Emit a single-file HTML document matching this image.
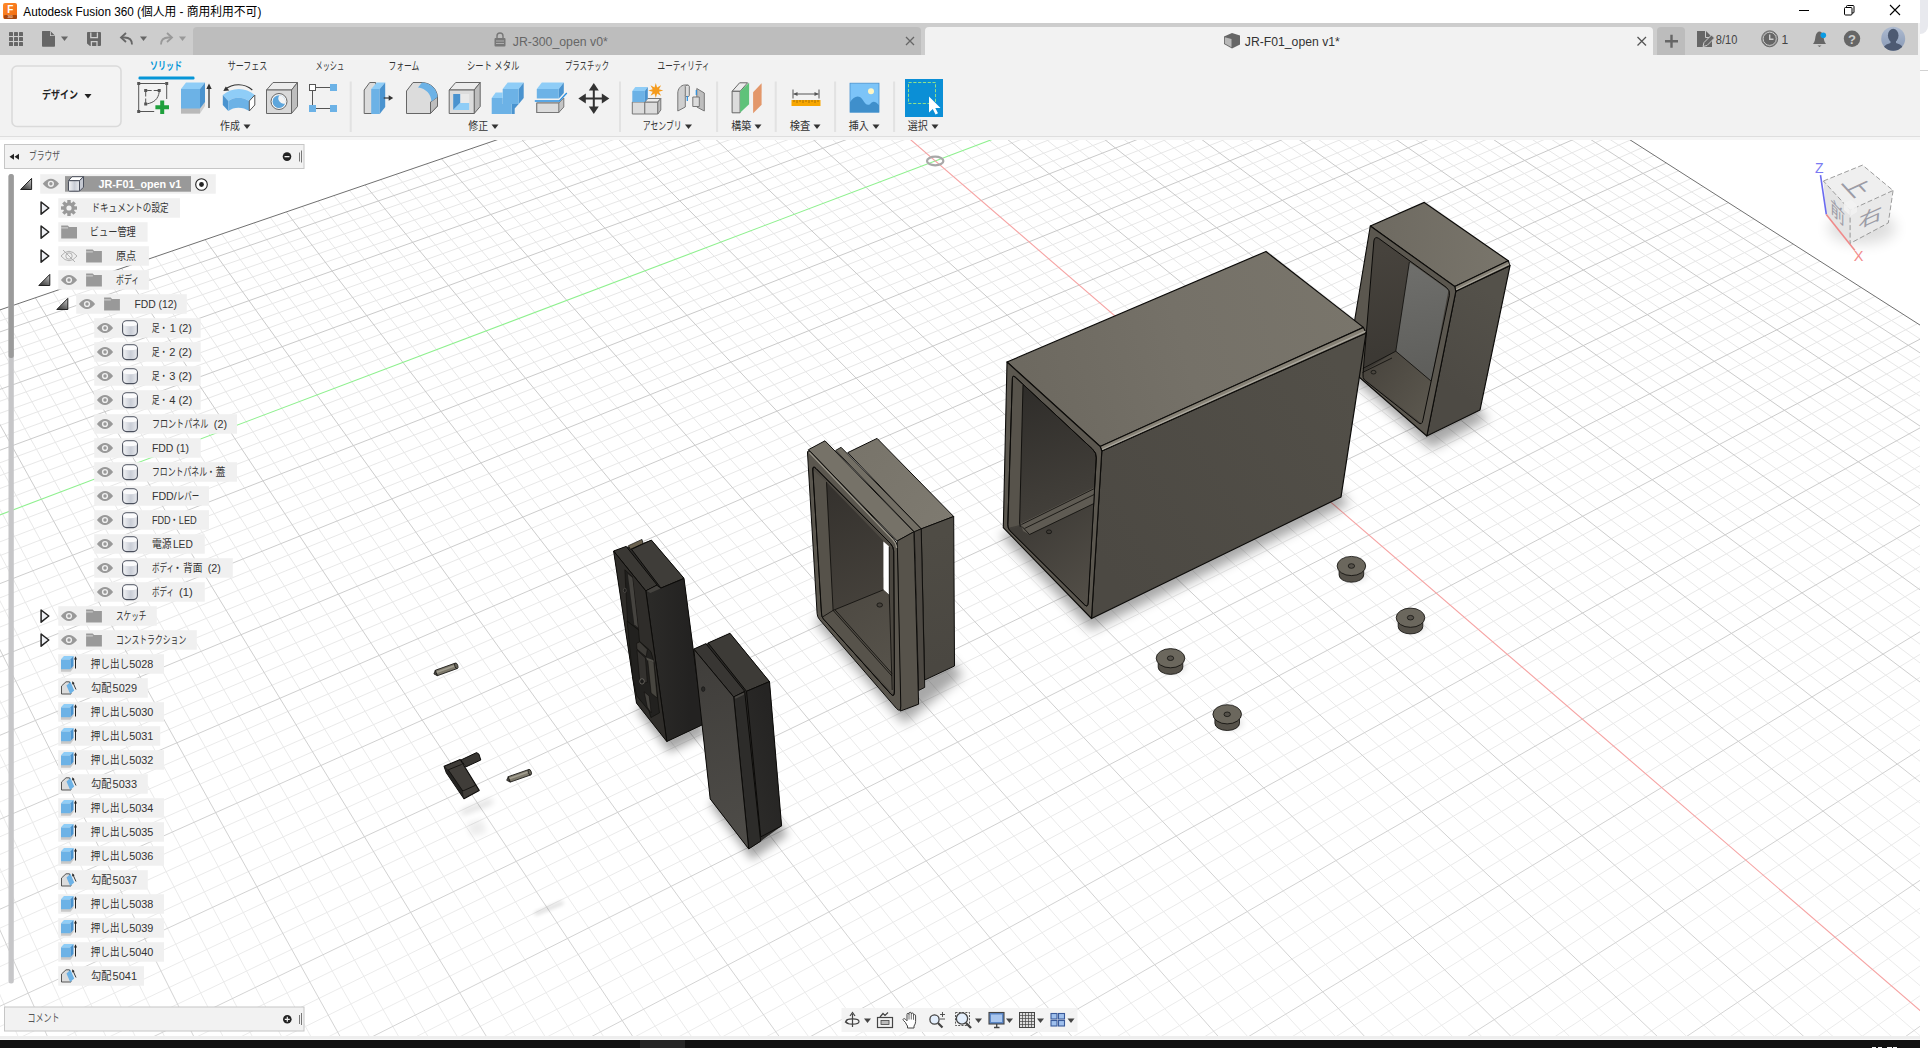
<!DOCTYPE html>
<html lang="ja"><head><meta charset="utf-8"><title>Autodesk Fusion 360</title>
<style>
html,body{margin:0;padding:0;background:#fff;overflow:hidden}
body{width:1928px;height:1048px;position:relative;font-family:"Liberation Sans","Noto Sans CJK JP",sans-serif;font-size:12px}
svg text{font-family:"Liberation Sans","Noto Sans CJK JP",sans-serif}
.abs{position:absolute}
#titlebar{left:0;top:0;width:1920px;height:23px;background:#fff}
#tabbar{left:0;top:23px;width:1918px;height:32px;background:#cdcdcd}
#toolbar{left:0;top:55px;width:1920px;height:85px;background:#f2f2f2}
#viewport{left:0;top:140px;width:1920px;height:896px;background:#fff;overflow:hidden}
#statusstrip{left:0;top:1036px;width:1920px;height:3px;background:#eeeeee;border-bottom:1px solid #f8f8f8}
#taskbar{left:0;top:1040px;width:1920px;height:8px;background:#111}
#rightstrip{left:1920px;top:0;width:8px;height:1048px;background:#fff}
</style></head><body>
<div id="titlebar" class="abs"><svg width="1920" height="23" viewBox="0 0 1920 23"><defs><linearGradient id="fg" x1="0" y1="0" x2="1" y2="1"><stop offset="0" stop-color="#ff8a2a"/><stop offset="1" stop-color="#f06a10"/></linearGradient></defs><rect x="3" y="3" width="14" height="16" rx="2" fill="url(#fg)"/><rect x="4" y="15" width="13" height="4" rx="1" fill="#a8470f"/><text x="7.2" y="13" font-size="10" fill="#fff" font-weight="bold">F</text><text x="7.5" y="18.3" font-size="3.2" fill="#f3c9b0" font-weight="bold">360</text><text x="23.3" y="16" font-size="12" fill="#000" textLength="238" lengthAdjust="spacingAndGlyphs">Autodesk Fusion 360 (個人用 - 商用利用不可)</text><path d="M1799 10.5H1809" stroke="#000" stroke-width="1"/><rect x="1844.5" y="7.5" width="7.5" height="7.5" rx="1" fill="none" stroke="#000"/><path d="M1846.5 7.5V6.5a1 1 0 0 1 1-1H1853a1 1 0 0 1 1 1V12a1 1 0 0 1 -1 1H1852" fill="none" stroke="#000"/><path d="M1890 5L1900 15M1900 5L1890 15" stroke="#000" stroke-width="1.1"/></svg></div><div id="tabbar" class="abs"><svg width="1918" height="32" viewBox="0 23 1918 32"><rect x="9" y="32" width="4" height="4" rx="0.6" fill="#666"/><rect x="9" y="37" width="4" height="4" rx="0.6" fill="#666"/><rect x="9" y="42" width="4" height="4" rx="0.6" fill="#666"/><rect x="14" y="32" width="4" height="4" rx="0.6" fill="#666"/><rect x="14" y="37" width="4" height="4" rx="0.6" fill="#666"/><rect x="14" y="42" width="4" height="4" rx="0.6" fill="#666"/><rect x="19" y="32" width="4" height="4" rx="0.6" fill="#666"/><rect x="19" y="37" width="4" height="4" rx="0.6" fill="#666"/><rect x="19" y="42" width="4" height="4" rx="0.6" fill="#666"/><path d="M42.5 31H50L55 36V46a.8 .8 0 0 1 -.8 .8H42.8a.8 .8 0 0 1 -.8 -.8V31.8a.8 .8 0 0 1 .5 -.8Z" fill="#666"/><path d="M50 31L55 36H50Z" fill="#cdcdcd"/><path d="M50.8 31.5L54.6 35.2H50.8Z" fill="#666"/><polygon points="61.0,36.5 68.0,36.5 64.5,41.0" fill="#666"/><path d="M87.8 32H100a1 1 0 0 1 1 1V45a1 1 0 0 1 -1 1H90L87 43.5V32.8a.8 .8 0 0 1 .8 -.8Z" fill="#666"/><path d="M90.8 32.5V37.6H97.4V32.5" fill="none" stroke="#cdcdcd" stroke-width="1.3"/><path d="M91.4 46V41.6H97V46" fill="none" stroke="#cdcdcd" stroke-width="1.3"/><path d="M132 44.5C132 40 129 37.5 124.5 37.5H121.5" fill="none" stroke="#666" stroke-width="1.8"/><path d="M126 33L121 37.5L126 42" fill="none" stroke="#666" stroke-width="1.8"/><polygon points="140.0,36.5 147.0,36.5 143.5,41.0" fill="#666"/><path d="M161 44.5C161 40 164 37.5 168.5 37.5H171.5" fill="none" stroke="#999" stroke-width="1.8"/><path d="M167 33L172 37.5L167 42" fill="none" stroke="#999" stroke-width="1.8"/><polygon points="179.0,36.5 186.0,36.5 182.5,41.0" fill="#999"/><path d="M193 55V31a4 4 0 0 1 4 -4H917a4 4 0 0 1 4 4V55Z" fill="#bdbdbd"/><rect x="494.5" y="38" width="11" height="8.5" rx="1" fill="#777"/><path d="M497 38V36a3 3 0 0 1 6 0V38" fill="none" stroke="#777" stroke-width="1.4"/><path d="M496 41H504M496 43.5H504" stroke="#bdbdbd" stroke-width="0.8"/><text x="512.8" y="45.7" font-size="12" fill="#666" textLength="95" lengthAdjust="spacingAndGlyphs">JR-300_open v0*</text><path d="M906 37L914 45M914 37L906 45" stroke="#666" stroke-width="1.3"/><path d="M925 55V31a4 4 0 0 1 4 -4H1649a4 4 0 0 1 4 4V55Z" fill="#f2f2f2"/><polygon points="1224,36.5 1232,33 1240,35.5 1240,44.5 1232,48.5 1224,44" fill="#666"/><polygon points="1224.8,37.3 1231.5,39 1231.5,47.3 1224.8,43.6" fill="#b8b8b8"/><text x="1244.8" y="45.8" font-size="12" fill="#333" textLength="95" lengthAdjust="spacingAndGlyphs">JR-F01_open v1*</text><path d="M1637.5 37L1646 45.5M1646 37L1637.5 45.5" stroke="#555" stroke-width="1.3"/><path d="M1657 55V31a4 4 0 0 1 4 -4H1681a4 4 0 0 1 4 4V55Z" fill="#bcbcbc"/><path d="M1665 41.3H1678M1671.5 34.8V47.8" stroke="#666" stroke-width="2.4"/><path d="M1697 31H1706L1712 37V47H1697Z" fill="#666"/><path d="M1705.5 31V37.5H1712" fill="none" stroke="#cdcdcd" stroke-width="1"/><path d="M1703 46.5L1704 42.5L1711.5 35L1714.5 38L1707 45.5Z" fill="#666" stroke="#cdcdcd" stroke-width="1"/><text x="1715.8" y="43.5" font-size="12" fill="#444" textLength="21.5" lengthAdjust="spacingAndGlyphs">8/10</text><circle cx="1769.7" cy="38.8" r="7.6" fill="#666" stroke="#cdcdcd" stroke-width="0"/><circle cx="1769.7" cy="38.8" r="8" fill="none" stroke="#666" stroke-width="1"/><circle cx="1769.7" cy="38.8" r="6.6" fill="#666" stroke="#cdcdcd" stroke-width="1"/><path d="M1769.7 34.5V39.3H1773.5" fill="none" stroke="#cdcdcd" stroke-width="1.4"/><text x="1781.5" y="43.5" font-size="12" fill="#444">1</text><path d="M1813 44C1815 42 1815 39 1815.5 36.5C1816 33 1818 31.5 1819.5 31.5C1821 31.5 1823 33 1823.5 36.5C1824 39 1824 42 1826 44Z" fill="#666"/><path d="M1817.5 45.5H1821.5L1819.5 47Z" fill="#666"/><circle cx="1823.3" cy="35.2" r="2.8" fill="#0b9be3"/><circle cx="1852" cy="38.8" r="8.2" fill="#666"/><text x="1852" y="43.6" font-size="13" fill="#cdcdcd" font-weight="bold" text-anchor="middle">?</text><defs><linearGradient id="av" x1="0" y1="0" x2="0" y2="1"><stop offset="0" stop-color="#aebbd0"/><stop offset="1" stop-color="#8798b5"/></linearGradient><clipPath id="avc"><circle cx="1893.2" cy="38.8" r="12"/></clipPath></defs><circle cx="1893.2" cy="38.8" r="12" fill="url(#av)"/><g clip-path="url(#avc)" fill="#4d5a72"><ellipse cx="1893.2" cy="35.5" rx="5.3" ry="6.8"/><path d="M1882 52C1882 46 1887 44 1890.5 43V40H1896V43C1899.5 44 1904.5 46 1904.5 52Z"/></g></svg></div><div id="toolbar" class="abs"><svg width="1920" height="85" viewBox="0 55 1920 85"><rect x="0" y="136" width="1920" height="1" fill="#dedede"/><rect x="0" y="137" width="1920" height="3" fill="#f5f5f5"/><rect x="12" y="66" width="109" height="60.5" rx="5" fill="#f3f3f3" stroke="#dadada" stroke-width="1.6"/><text x="42" y="98.5" font-size="11" fill="#222" textLength="36" lengthAdjust="spacingAndGlyphs" font-weight="bold">デザイン</text><polygon points="84.5,94 91.5,94 88,98.5" fill="#222"/><text x="150" y="70" font-size="11" fill="#0696d7" textLength="32" lengthAdjust="spacingAndGlyphs" font-weight="bold">ソリッド</text><text x="227.8" y="70" font-size="11" fill="#333" textLength="39.4" lengthAdjust="spacingAndGlyphs">サーフェス</text><text x="315.5" y="70" font-size="11" fill="#333" textLength="28.7" lengthAdjust="spacingAndGlyphs">メッシュ</text><text x="388.5" y="70" font-size="11" fill="#333" textLength="30.8" lengthAdjust="spacingAndGlyphs">フォーム</text><text x="467" y="70" font-size="11" fill="#333" textLength="52.4" lengthAdjust="spacingAndGlyphs">シート メタル</text><text x="565" y="70" font-size="11" fill="#333" textLength="44" lengthAdjust="spacingAndGlyphs">プラスチック</text><text x="657.6" y="70" font-size="11" fill="#333" textLength="52" lengthAdjust="spacingAndGlyphs">ユーティリティ</text><rect x="138.5" y="76.5" width="56" height="3" rx="1.2" fill="#0696d7"/><rect x="349.7" y="81.5" width="2" height="50.5" fill="#e2e2e2"/><rect x="619" y="81.5" width="2" height="50.5" fill="#e2e2e2"/><rect x="716.1" y="81.5" width="2" height="50.5" fill="#e2e2e2"/><rect x="774.7" y="81.5" width="2" height="50.5" fill="#e2e2e2"/><rect x="834.1" y="81.5" width="2" height="50.5" fill="#e2e2e2"/><rect x="893.1" y="81.5" width="2" height="50.5" fill="#e2e2e2"/><g transform="translate(137.2,82)" fill="none" stroke="#555" stroke-width="1"><path d="M2.5 1.5H28M1.5 3V28M29.5 3V17M2.5 29.5H17" /><rect x="0.0" y="0.0" width="3" height="3" fill="#555" stroke="none"/><rect x="28.0" y="0.0" width="3" height="3" fill="#555" stroke="none"/><rect x="0.0" y="28.0" width="3" height="3" fill="#555" stroke="none"/><path d="M10 8.5H21M8.5 10V21" stroke-dasharray="4.5,2"/><path d="M10 21.8C17 20.5 21 17 22 10" /><rect x="7.0" y="7.0" width="3" height="3" fill="#555" stroke="none"/><rect x="20.5" y="7.0" width="3" height="3" fill="#555" stroke="none"/><rect x="7.0" y="20.5" width="3" height="3" fill="#555" stroke="none"/><path d="M25 18.5V32M18.2 25.2H31.8" stroke="#1fa03c" stroke-width="4"/></g><g transform="translate(181,82)"><polygon points="0,26 19,26 24,19 24,24 19,31.5 0,31.5" fill="#cfcfcf"/><polygon points="0,26 19,26 19,31.5 0,31.5" fill="#b9b9b9"/><polygon points="0,7 19,7 19,26.5 0,26.5" fill="#6cb2e6"/><polygon points="0,7 5,0.5 24,0.5 19,7" fill="#8fcdf7"/><polygon points="19,7 24,0.5 24,20 19,26.5" fill="#4a93cf"/><path d="M28 26V5" stroke="#333" stroke-width="1.3"/><polygon points="28,1.5 25.3,7 30.7,7" fill="#333"/></g><g transform="translate(222.8,84)"><path d="M2 5.5C10 -1 22 -1 29.5 6" fill="none" stroke="#333" stroke-width="1.1"/><polygon points="0.5,7 6.5,6.5 3,2.5" fill="#333"/><path d="M0 11C9 3 23 3 32 11L26.5 17C20 12.5 11 12.5 5.5 17Z" fill="#8fcdf7"/><path d="M0 11L5.5 17V27L0 21Z" fill="#4a93cf"/><path d="M5.5 17C11 12.5 20 12.5 26.5 17V27C20 22.5 11 22.5 5.5 27Z" fill="#6cb2e6"/><path d="M26.5 17L32 11V21L26.5 27Z" fill="#fff" stroke="#555" stroke-width="1"/></g><g transform="translate(266,82)" stroke="#666" stroke-width="1" stroke-linejoin="round"><polygon points="0.5,8 7,0.5 31.5,0.5 25.5,8" fill="#ececec"/><polygon points="25.5,8 31.5,0.5 31.5,24.5 25.5,31.5" fill="#bdbdbd"/><rect x="0.5" y="8" width="25" height="23.5" fill="#d9d9d9"/><circle cx="13" cy="19.5" r="8" fill="#f4f4f4"/><path d="M8.5 15a6.3 6.3 0 1 0 10.5 6.5a6 6 0 0 1 -10.5 -6.5z" fill="#4a93cf" stroke="none"/><circle cx="13" cy="19.5" r="6.3" fill="#5ea6dc" stroke="none"/><path d="M13.5 13.2a6.3 6.3 0 0 1 5.6 8.2a5.2 5.2 0 0 1 -5.6 -8.2z" fill="#f4f4f4" stroke="none"/></g><g transform="translate(309,84)"><path d="M3.5 6V22M6 3.5H22M6 24.5H22" stroke="#555" stroke-width="1" fill="none"/><rect x="0.5" y="0.5" width="6" height="6" fill="#fff" stroke="#555"/><rect x="21" y="0" width="7" height="7" fill="#6cb2e6"/><rect x="0" y="21" width="7" height="7" fill="#6cb2e6"/><rect x="21" y="21" width="7" height="7" fill="#6cb2e6"/></g><g transform="translate(363.7,82)"><polygon points="0.5,8 6,0.5 12,0.5 12,31.5 0.5,31.5" fill="#dcdcdc" stroke="#666" stroke-linejoin="round"/><polygon points="7.5,7 16,7 16,32 7.5,32" fill="#6cb2e6"/><polygon points="7.5,7 13,0.5 21.5,0.5 16,7" fill="#8fcdf7"/><polygon points="16,7 21.5,0.5 21.5,25 16,32" fill="#4a93cf"/><path d="M20 16H27" stroke="#333" stroke-width="1.2"/><polygon points="29.5,16 25,13.3 25,18.7" fill="#333"/></g><g transform="translate(406,82)" stroke-linejoin="round"><path d="M0.5 9L7 0.5H16C25 1 31 7 31.5 15V24L24.5 31.5H0.5Z" fill="#dcdcdc" stroke="#666"/><path d="M24.5 31.5V20L31.5 15V24Z" fill="#bdbdbd" stroke="#666"/><path d="M12 5.5L16 0.5C25 1 31 7 31.5 15L25.5 19.5C25 12 20 6.5 12 5.5Z" fill="#6cb2e6"/></g><g transform="translate(448.7,82)" stroke="#666" stroke-linejoin="round"><polygon points="0.5,8 7,0.5 31.5,0.5 25.5,8" fill="#ececec"/><polygon points="25.5,8 31.5,0.5 31.5,24.5 25.5,31.5" fill="#bdbdbd"/><rect x="0.5" y="8" width="25" height="23.5" fill="#dcdcdc"/><rect x="4.5" y="12" width="16" height="16" fill="#e9e9e9" stroke="none"/><polygon points="4.5,12 11.5,12 11.5,21 4.5,28" fill="#4a93cf" stroke="none"/><polygon points="4.5,28 11.5,21 20.5,21 20.5,28" fill="#8fcdf7" stroke="none"/></g><g transform="translate(491.7,82)"><polygon points="11,7 16,0.5 32,0.5 27,7" fill="#8fcdf7"/><polygon points="27,7 32,0.5 32,16 27,22" fill="#4a93cf"/><rect x="11" y="7" width="16" height="15" fill="#6cb2e6"/><polygon points="0,16 4,10.5 11,10.5 11,16" fill="#8fcdf7"/><polygon points="20,22 27,22 23,26.5 23,32 20,32" fill="#4a93cf"/><polygon points="0,16 11,16 11,22 20,22 20,32 0,32" fill="#6cb2e6"/></g><g transform="translate(534.8,82)"><polygon points="2,21 24,21 29,16 29,25 24,30.5 2,30.5" fill="#c4c4c4" stroke="#777" stroke-linejoin="round"/><rect x="2" y="21" width="22" height="9.5" fill="#dcdcdc" stroke="#777"/><polygon points="2,7 7,0.5 29,0.5 24,7" fill="#8fcdf7"/><polygon points="24,7 29,0.5 29,11 24,16.5" fill="#4a93cf"/><rect x="2" y="7" width="22" height="9.5" fill="#6cb2e6"/><path d="M0 19H24.5L32 11" fill="none" stroke="#2a8fe0" stroke-width="1.3"/></g><g transform="translate(578.3,82.5)" fill="#333"><path d="M15.5 6V26M6 16H25" stroke="#333" stroke-width="2"/><polygon points="15.5,0.5 10.5,8 20.5,8"/><polygon points="15.5,31.5 10.5,24 20.5,24"/><polygon points="0,16 7.5,11 7.5,21"/><polygon points="31,16 23.5,11 23.5,21"/></g><g transform="translate(631.8,83)" stroke-linejoin="round"><polygon points="0.5,19 13,19 13,31 0.5,31" fill="#dcdcdc" stroke="#777"/><polygon points="13,19 26,19 26,31 13,31" fill="#dcdcdc" stroke="#777"/><polygon points="13,19 16,15.5 29,15.5 26,19" fill="#ececec" stroke="#777"/><polygon points="26,19 29,15.5 29,27 26,31" fill="#bdbdbd" stroke="#777"/><rect x="0.5" y="8" width="12.5" height="11" fill="#6cb2e6"/><polygon points="0.5,8 3.5,4 16,4 13,8" fill="#8fcdf7"/><polygon points="13,8 16,4 16,15.5 13,19" fill="#4a93cf"/><polygon points="24.0,0.0 25.3,4.4 29.3,2.2 27.1,6.2 31.5,7.5 27.1,8.8 29.3,12.8 25.3,10.6 24.0,15.0 22.7,10.6 18.7,12.8 20.9,8.8 16.5,7.5 20.9,6.2 18.7,2.2 22.7,4.4" fill="#f59b1c"/></g><g transform="translate(676.8,84)" stroke="#777" stroke-linejoin="round"><path d="M1 9C1 5 4 1 8 1H11.5V11H8.5V23L1 27Z" fill="#cfcfcf"/><path d="M8.5 2.5a2 1.2 0 1 0 4 0a2 1.2 0 1 0 -4 0z" fill="#eee"/><path d="M8.5 2.5V11.5a2 1.2 0 0 0 4 0V2.5" fill="#dcdcdc"/><path d="M20 4.5L27.5 9V27L20 23Z" fill="#bdbdbd"/><path d="M16 13H22.5V22.5H16Z" fill="#dcdcdc"/><path d="M10.5 12V17M19.5 6V11" stroke="#2a8fe0" stroke-width="1.2"/></g><g transform="translate(731.6,82.3)" stroke-linejoin="round"><polygon points="0.5,9 8,0.5 16,0.5 8.5,9" fill="#ececec" stroke="#666"/><rect x="0.5" y="9" width="8" height="21.5" fill="#dcdcdc" stroke="#666"/><polygon points="8.5,9 17.5,0.5 17.5,22 8.5,30.5" fill="#5fc27a"/><polygon points="21.5,10 30,1 30,22.5 21.5,31" fill="#e3976a"/></g><g transform="translate(791.5,89.5)"><path d="M1.5 0V9M27.5 0V9M2 4.5H27" stroke="#555" stroke-width="1" fill="none"/><polygon points="2,4.5 6,2.5 6,6.5" fill="#555"/><polygon points="27,4.5 23,2.5 23,6.5" fill="#555"/><rect x="0" y="10.5" width="29" height="6" fill="#f7a600"/><path d="M2.5 10.5V12.5M5.5 10.5V13.5M8.5 10.5V12.5M11.5 10.5V13.5M14.5 10.5V12.5M17.5 10.5V13.5M20.5 10.5V12.5M23.5 10.5V13.5M26.5 10.5V12.5" stroke="#9a6400" stroke-width="0.8"/></g><g transform="translate(850,83.2)"><rect x="0" y="0" width="29" height="29" fill="#7cc4f8" stroke="#4a93cf" stroke-width="0.8"/><path d="M0 29V19C4 13 9 11 13 17C15 20 17 23 20 21C22 18 25 17 29 22V29Z" fill="#3f8fcb"/><circle cx="21" cy="8" r="3" fill="#fff6c4"/></g><g transform="translate(905,79)"><rect x="0" y="0" width="38" height="38" fill="#0b8fd6"/><rect x="3.5" y="3.5" width="27" height="21" fill="none" stroke="#8fe08a" stroke-width="1" stroke-dasharray="3.2,1.6"/><path d="M24 17.5V33.5L27.8 30L30.5 35.5L33 34.2L30.3 29H35.5Z" fill="#fff"/></g><text x="220" y="130.3" font-size="11" fill="#333" textLength="19.8" lengthAdjust="spacingAndGlyphs">作成</text><polygon points="243.5,124.5 250.5,124.5 247,129.0" fill="#333"/><text x="468.3" y="130.3" font-size="11" fill="#333" textLength="19.8" lengthAdjust="spacingAndGlyphs">修正</text><polygon points="491.5,124.5 498.5,124.5 495,129.0" fill="#333"/><text x="642.7" y="130.3" font-size="11" fill="#333" textLength="39" lengthAdjust="spacingAndGlyphs">アセンブリ</text><polygon points="685.0,124.5 692.0,124.5 688.5,129.0" fill="#333"/><text x="731.3" y="130.3" font-size="11" fill="#333" textLength="20" lengthAdjust="spacingAndGlyphs">構築</text><polygon points="754.5,124.5 761.5,124.5 758,129.0" fill="#333"/><text x="789.7" y="130.3" font-size="11" fill="#333" textLength="20.5" lengthAdjust="spacingAndGlyphs">検査</text><polygon points="813.5,124.5 820.5,124.5 817,129.0" fill="#333"/><text x="848.7" y="130.3" font-size="11" fill="#333" textLength="20" lengthAdjust="spacingAndGlyphs">挿入</text><polygon points="872.5,124.5 879.5,124.5 876,129.0" fill="#333"/><text x="907.7" y="130.3" font-size="11" fill="#333" textLength="20" lengthAdjust="spacingAndGlyphs">選択</text><polygon points="931.5,124.5 938.5,124.5 935,129.0" fill="#333"/></svg></div><div id="statusstrip" class="abs"></div><div id="taskbar" class="abs"><div class="abs" style="left:640px;top:0;width:45px;height:8px;background:#262626"></div><div class="abs" style="left:1872px;top:6.9px;width:4px;height:1.6px;background:#f4f4f4"></div><div class="abs" style="left:1877.5px;top:6.9px;width:4.5px;height:1.6px;background:#f4f4f4"></div><div class="abs" style="left:1887px;top:6.9px;width:4.5px;height:1.6px;background:#f4f4f4"></div><div class="abs" style="left:1892.7px;top:6.9px;width:4.5px;height:1.6px;background:#f4f4f4"></div></div><div id="rightstrip" class="abs"><div class="abs" style="left:0;top:0;width:8px;height:33.5px;background:#e8e9ee;border-radius:0 0 8px 0"></div><div class="abs" style="left:0;top:70px;width:8px;height:1px;background:#d2d2d2"></div></div><div class="abs" style="left:1918px;top:23px;width:2px;height:32px;background:#f2f2f2"></div>
<div id="viewport" class="abs"><svg width="1920" height="896" viewBox="0 140 1920 896"><defs><filter id="b2" x="-50%" y="-50%" width="200%" height="200%"><feGaussianBlur stdDeviation="2"/></filter><filter id="b3" x="-50%" y="-50%" width="200%" height="200%"><feGaussianBlur stdDeviation="3"/></filter><filter id="b5" x="-50%" y="-50%" width="200%" height="200%"><feGaussianBlur stdDeviation="5"/></filter><filter id="b6" x="-50%" y="-50%" width="200%" height="200%"><feGaussianBlur stdDeviation="6"/></filter><filter id="b7" x="-50%" y="-50%" width="200%" height="200%"><feGaussianBlur stdDeviation="7"/></filter><filter id="b8" x="-50%" y="-50%" width="200%" height="200%"><feGaussianBlur stdDeviation="8"/></filter><linearGradient id="gTop" gradientUnits="userSpaceOnUse" x1="1010" y1="400" x2="1360" y2="300"><stop offset="0" stop-color="#6c685f"/><stop offset="0.5" stop-color="#757168"/><stop offset="1" stop-color="#79756b"/></linearGradient><linearGradient id="gRight" gradientUnits="userSpaceOnUse" x1="1100" y1="560" x2="1360" y2="400"><stop offset="0" stop-color="#4c4943"/><stop offset="1" stop-color="#524f48"/></linearGradient><linearGradient id="gIn" gradientUnits="userSpaceOnUse" x1="1020" y1="390" x2="1085" y2="560"><stop offset="0" stop-color="#2f2d2a"/><stop offset="0.6" stop-color="#403d38"/><stop offset="1" stop-color="#4b4741"/></linearGradient><linearGradient id="gFloor" gradientUnits="userSpaceOnUse" x1="1030" y1="530" x2="1085" y2="600"><stop offset="0" stop-color="#403d38"/><stop offset="1" stop-color="#524e47"/></linearGradient><linearGradient id="gTop2" gradientUnits="userSpaceOnUse" x1="1372" y1="240" x2="1505" y2="250"><stop offset="0" stop-color="#6e6a61"/><stop offset="1" stop-color="#79756b"/></linearGradient><linearGradient id="gRight2" gradientUnits="userSpaceOnUse" x1="1440" y1="380" x2="1500" y2="300"><stop offset="0" stop-color="#4d4a44"/><stop offset="1" stop-color="#54514a"/></linearGradient><linearGradient id="gSL" gradientUnits="userSpaceOnUse" x1="1380" y1="250" x2="1400" y2="350"><stop offset="0" stop-color="#47433d"/><stop offset="1" stop-color="#3c3934"/></linearGradient><linearGradient id="gSB" gradientUnits="userSpaceOnUse" x1="1410" y1="270" x2="1430" y2="375"><stop offset="0" stop-color="#6e6e6b"/><stop offset="1" stop-color="#5e5e5b"/></linearGradient><linearGradient id="gSF" gradientUnits="userSpaceOnUse" x1="1370" y1="370" x2="1425" y2="410"><stop offset="0" stop-color="#4a463f"/><stop offset="1" stop-color="#5a564d"/></linearGradient><linearGradient id="gTop3" gradientUnits="userSpaceOnUse" x1="850" y1="450" x2="950" y2="520"><stop offset="0" stop-color="#78746a"/><stop offset="1" stop-color="#7e7a70"/></linearGradient><linearGradient id="gRight3" gradientUnits="userSpaceOnUse" x1="920" y1="540" x2="955" y2="660"><stop offset="0" stop-color="#4f4c45"/><stop offset="1" stop-color="#4a4741"/></linearGradient><linearGradient id="gIn3" gradientUnits="userSpaceOnUse" x1="830" y1="490" x2="880" y2="600"><stop offset="0" stop-color="#35322e"/><stop offset="1" stop-color="#45413b"/></linearGradient><linearGradient id="gFloor3" gradientUnits="userSpaceOnUse" x1="830" y1="600" x2="890" y2="680"><stop offset="0" stop-color="#4d4942"/><stop offset="1" stop-color="#57534b"/></linearGradient><linearGradient id="gFR" gradientUnits="userSpaceOnUse" x1="650" y1="600" x2="690" y2="600"><stop offset="0" stop-color="#2b2a28"/><stop offset="1" stop-color="#232221"/></linearGradient><linearGradient id="gFR2" gradientUnits="userSpaceOnUse" x1="740" y1="760" x2="780" y2="750"><stop offset="0" stop-color="#2c2b29"/><stop offset="1" stop-color="#252423"/></linearGradient><linearGradient id="gFF2" gradientUnits="userSpaceOnUse" x1="700" y1="660" x2="745" y2="840"><stop offset="0" stop-color="#403e3b"/><stop offset="1" stop-color="#4e4c48"/></linearGradient><linearGradient id="gPin" gradientUnits="userSpaceOnUse" x1="0" y1="0" x2="0" y2="0"><stop offset="0" stop-color="#8a8678"/></linearGradient><linearGradient id="gFade" gradientUnits="userSpaceOnUse" x1="0" y1="300" x2="0" y2="1036"><stop offset="0" stop-color="#fff" stop-opacity="0"/><stop offset="1" stop-color="#fff" stop-opacity="0.2"/></linearGradient></defs><path d="M1243.5 -107.2L-374.3 449.7M1261.1 -95.9L-366.5 470.7M1270.0 -90.2L-362.5 481.4M1279.0 -84.4L-358.5 492.2M1288.1 -78.6L-354.5 503.2M1306.4 -66.9L-346.3 525.3M1315.7 -61.0L-342.2 536.6M1325.0 -55.1L-338.0 548.0M1334.4 -49.0L-333.7 559.5M1353.4 -36.9L-325.1 582.8M1363.1 -30.7L-320.7 594.7M1372.8 -24.5L-316.3 606.7M1382.5 -18.3L-311.8 618.8M1402.3 -5.7L-302.7 643.5M1412.3 0.7L-298.0 656.0M1422.4 7.2L-293.4 668.7M1432.6 13.7L-288.6 681.5M1453.1 26.8L-279.0 707.5M1463.6 33.5L-274.1 720.8M1474.1 40.2L-269.2 734.2M1484.6 46.9L-264.2 747.7M1506.0 60.6L-254.0 775.3M1516.9 67.5L-248.8 789.4M1527.8 74.5L-243.5 803.5M1538.8 81.6L-238.2 817.9M1561.1 95.8L-227.4 847.1M1572.4 103.0L-221.9 862.0M1583.8 110.3L-216.4 877.1M1595.3 117.6L-210.7 892.3M1618.6 132.5L-199.3 923.4M1630.4 140.0L-193.4 939.2M1642.3 147.6L-187.5 955.2M1654.2 155.3L-181.5 971.4M1678.5 170.8L-169.3 1004.5M1690.8 178.7L-163.1 1021.3M1703.2 186.6L-156.8 1038.4M1715.7 194.6L-150.4 1055.6M1741.1 210.8L-137.4 1090.9M1754.0 219.0L-130.8 1108.8M1766.9 227.3L-124.0 1127.0M1780.0 235.6L-117.2 1145.5M1806.5 252.6L-103.3 1183.1M1820.0 261.2L-96.2 1202.3M1833.6 269.8L-89.0 1221.8M1847.2 278.6L-81.7 1241.5M1875.0 296.3L-66.8 1281.8M1889.1 305.3L-59.2 1302.4M1903.3 314.4L-51.5 1323.3M1917.6 323.6L-43.7 1344.4M1946.7 342.2L-27.7 1387.7M1961.5 351.6L-19.6 1409.8M1976.4 361.1L-11.3 1432.2M1991.4 370.7L-2.9 1455.0M2022.0 390.2L14.3 1501.6M2037.4 400.1L23.1 1525.4M2053.1 410.1L32.1 1549.6M2068.9 420.2L41.1 1574.1M2100.9 440.7L59.7 1624.4M2117.2 451.1L69.2 1650.1M2133.6 461.6L78.9 1676.2M2150.2 472.2L88.7 1702.8M2183.9 493.7L108.8 1757.2M2201.0 504.6L119.1 1785.1M2218.3 515.7L129.5 1813.4M2235.8 526.8L140.2 1842.2M2271.3 549.5L162.0 1901.3M2289.3 561.0L173.2 1931.6M2307.5 572.7L184.6 1962.4M2326.0 584.4L196.2 1993.8M2363.4 608.3L220.0 2058.2M2382.4 620.5L232.2 2091.3M2401.6 632.8L244.6 2125.0M2421.0 645.2L257.3 2159.2M2460.6 670.4L283.3 2229.7M2480.6 683.3L296.7 2266.0M2501.0 696.2L310.4 2302.9M2521.5 709.4L324.3 2340.5M1223.8 -109.0L2530.4 731.6M1201.9 -101.5L2506.3 749.7M1190.9 -97.7L2494.1 758.9M1179.8 -93.9L2481.8 768.1M1168.6 -90.1L2469.4 777.4M1146.2 -82.4L2444.3 796.2M1134.8 -78.5L2431.7 805.8M1123.5 -74.6L2418.9 815.4M1112.0 -70.7L2406.0 825.0M1089.0 -62.8L2379.9 844.6M1077.4 -58.9L2366.8 854.5M1065.7 -54.9L2353.5 864.5M1054.0 -50.9L2340.1 874.6M1030.3 -42.8L2312.9 895.0M1018.4 -38.7L2299.2 905.3M1006.5 -34.6L2285.4 915.7M994.4 -30.5L2271.4 926.2M970.2 -22.2L2243.2 947.4M958.0 -18.0L2228.9 958.2M945.7 -13.8L2214.4 969.0M933.3 -9.6L2199.9 979.9M908.5 -1.1L2170.4 1002.1M895.9 3.2L2155.5 1013.3M883.3 7.6L2140.5 1024.6M870.6 11.9L2125.3 1036.0M845.1 20.6L2094.5 1059.1M832.2 25.0L2079.0 1070.8M819.3 29.5L2063.3 1082.6M806.2 33.9L2047.4 1094.5M780.0 42.9L2015.3 1118.7M766.8 47.4L1999.0 1130.9M753.5 52.0L1982.6 1143.2M740.1 56.6L1966.0 1155.7M713.1 65.8L1932.5 1180.9M699.5 70.4L1915.4 1193.7M685.9 75.1L1898.3 1206.6M672.1 79.8L1880.9 1219.6M644.4 89.3L1845.8 1246.0M630.5 94.1L1828.0 1259.4M616.4 98.9L1810.0 1272.9M602.3 103.7L1791.9 1286.6M573.8 113.5L1755.0 1314.3M559.4 118.4L1736.4 1328.3M545.0 123.3L1717.5 1342.5M530.4 128.3L1698.5 1356.8M501.1 138.4L1659.9 1385.8M486.4 143.4L1640.3 1400.5M471.5 148.5L1620.5 1415.4M456.6 153.6L1600.5 1430.4M426.4 163.9L1560.0 1460.9M411.2 169.1L1539.4 1476.3M395.9 174.4L1518.6 1491.9M380.5 179.6L1497.6 1507.7M349.5 190.3L1454.9 1539.8M333.8 195.6L1433.3 1556.0M318.0 201.0L1411.4 1572.5M302.2 206.4L1389.3 1589.1M270.2 217.4L1344.4 1622.8M254.1 222.9L1321.6 1639.9M237.9 228.5L1298.6 1657.3M221.6 234.0L1275.3 1674.8M188.6 245.3L1228.0 1710.3M172.0 251.0L1204.0 1728.4M155.3 256.7L1179.7 1746.7M138.4 262.5L1155.1 1765.1M104.5 274.1L1105.1 1802.7M87.4 280.0L1079.7 1821.7M70.1 285.9L1054.1 1841.0M52.8 291.8L1028.1 1860.6M17.7 303.8L975.3 1900.2M0.1 309.8L948.4 1920.4M-17.7 315.9L921.2 1940.9M-35.6 322.1L893.8 1961.5M-71.7 334.4L837.8 2003.5M-90.0 340.7L809.4 2024.9M-108.3 346.9L780.6 2046.6M-126.8 353.3L751.4 2068.5M-164.1 366.0L692.1 2113.1M-182.9 372.5L661.9 2135.7M-201.9 379.0L631.3 2158.7M-220.9 385.5L600.4 2182.0M-259.5 398.7L537.3 2229.4M-278.9 405.3L505.2 2253.5M-298.5 412.0L472.7 2277.9M-318.2 418.8L439.8 2302.7M-358.0 432.4L372.7 2353.1M-378.1 439.3L338.4 2378.8" stroke="#e7e7e7" stroke-width="1" fill="none"/><path d="M1252.3 -101.5L-370.4 460.1M1297.2 -72.8L-350.4 514.2M1343.9 -43.0L-329.4 571.1M1442.8 20.2L-283.8 694.4M1495.3 53.7L-259.1 761.5M1549.9 88.7L-232.9 832.4M1606.9 125.0L-205.0 907.8M1666.3 163.0L-175.5 987.8M1728.4 202.6L-143.9 1073.1M1793.2 244.1L-110.3 1164.2M1861.1 287.4L-74.3 1261.5M1932.1 332.8L-35.8 1365.9M2006.6 380.4L5.7 1478.1M2084.8 430.4L50.4 1599.1M2167.0 482.9L98.6 1729.8M2253.5 538.1L151.0 1871.5M2344.6 596.3L208.0 2025.7M2440.7 657.7L270.2 2194.2M2542.3 722.6L338.4 2378.8M1212.9 -105.3L2518.4 740.6M1157.4 -86.3L2456.9 786.8M1100.5 -66.8L2393.0 834.8M1042.2 -46.8L2326.6 884.7M982.3 -26.3L2257.3 936.8M920.9 -5.3L2185.2 991.0M857.9 16.2L2110.0 1047.5M726.7 61.2L1949.3 1168.2M658.3 84.6L1863.5 1232.8M588.1 108.6L1773.5 1300.4M515.8 133.3L1679.3 1371.2M441.5 158.8L1580.3 1445.5M365.0 184.9L1476.4 1523.7M286.3 211.9L1367.0 1605.9M205.1 239.7L1251.8 1692.4M121.5 268.3L1130.2 1783.8M35.3 297.8L1001.8 1880.3M-53.6 328.2L866.0 1982.4M-145.4 359.6L722.0 2090.6M-240.1 392.1L569.1 2205.5M-338.0 425.6L406.4 2327.7" stroke="#cacaca" stroke-width="1" fill="none"/><rect x="0" y="140" width="1920" height="896" fill="url(#gFade)"/><path d="M1392.4 -12.0L-307.2 631.1" stroke="#8ff08f" stroke-width="1.1" fill="none"/><path d="M793.2 38.4L2031.4 1106.5" stroke="#f6a3a3" stroke-width="1.1" fill="none"/><path d="M1234.7 -112.7L-378.1 439.3M1234.7 -112.7L2542.3 722.6" stroke="#707070" stroke-width="1" fill="none"/><ellipse cx="935.2" cy="161.0" rx="8.2" ry="4.3" fill="none" stroke="#a8a8a8" stroke-width="2.2"/><polygon points="1344.3,371.5 1431.1,448.8 1488.8,418.7 1414.3,353.0" fill="#000" opacity="0.34" filter="url(#b6)"/><polygon points="1370.3,226.0 1424.3,202.4 1508.3,260.8 1454.8,286.6" fill="url(#gTop2)" stroke="#0c0b09" stroke-width="1.2" stroke-linejoin="round"/><polygon points="1455.8,291.3 1510.0,265.6 1480.0,410.0 1426.8,436.0" fill="url(#gRight2)" stroke="#0c0b09" stroke-width="1.2" stroke-linejoin="round"/><polygon points="1454.8,286.6 1508.3,260.8 1510.0,265.6 1455.8,291.3" fill="#878276" stroke="#0c0b09" stroke-width="1.1" stroke-linejoin="round"/><path d="M1456.1 289.7L1509.4 263.90000000000003" stroke="#aeaba2" stroke-width="1" fill="none"/><polygon points="1370.3,226.0 1454.8,286.6 1455.8,291.3 1426.8,436.0 1347.0,366.5" fill="#5b574f" stroke="#0c0b09" stroke-width="1.1" stroke-linejoin="round"/><path d="M1373.9 240.9Q1374.7 235.9 1378.7 238.4L1446.4 287.4Q1450.4 290.4 1449.4 295.4L1422.8 420.6Q1421.8 425.6 1418.3 422.6L1364.5 380Q1362.5 378 1363.0 374Z" fill="#46423c"/><polygon points="1375.5,238.0 1409.4,262.0 1395.8,351.2 1363.5,372.0" fill="url(#gSL)"/><polygon points="1409.4,262.0 1448.5,290.0 1431.0,381.0 1395.8,351.2" fill="url(#gSB)"/><polygon points="1395.8,351.2 1431.0,381.0 1422.3,424.0 1363.0,377.5 1363.5,372.0" fill="url(#gSF)"/><path d="M1409.4 262L1395.8 351.2L1431 381M1395.8 351.2L1362.8 368.5M1362.5 372.5L1392 358" fill="none" stroke="#0c0b09" stroke-width="0.8"/><ellipse cx="1373.5" cy="372.2" rx="2.5" ry="1.8" fill="#4a463f" stroke="#0c0b09" stroke-width="0.7"/><path d="M1373.9 240.9Q1374.7 235.9 1378.7 238.4L1446.4 287.4Q1450.4 290.4 1449.4 295.4L1422.8 420.6Q1421.8 425.6 1418.3 422.6L1364.5 380Q1362.5 378 1363.0 374Z" fill="none" stroke="#0c0b09" stroke-width="1"/><polygon points="1000.3,535.2 1090.9,630.3 1350.0,503.5 1259.4,408.4" fill="#000" opacity="0.34" filter="url(#b6)"/><polygon points="1007.0,362.0 1266.0,251.5 1363.4,327.4 1100.2,446.5" fill="url(#gTop)" stroke="#0c0b09" stroke-width="1.2" stroke-linejoin="round"/><polygon points="1101.8,451.0 1366.1,332.9 1341.0,497.0 1091.5,618.5" fill="url(#gRight)" stroke="#0c0b09" stroke-width="1.2" stroke-linejoin="round"/><polygon points="1100.2,446.5 1363.4,327.4 1366.1,332.9 1101.8,451.0" fill="#878276" stroke="#0c0b09" stroke-width="1.1" stroke-linejoin="round"/><path d="M1102.1 449.4L1365.5 331.2" stroke="#aeaba2" stroke-width="1.1" fill="none"/><polygon points="1007.0,362.0 1100.2,446.5 1101.8,451.0 1091.5,618.5 1003.3,527.7" fill="#5b574f" stroke="#0c0b09" stroke-width="1.1" stroke-linejoin="round"/><path d="M1012.4 378.6Q1012.4 374.6 1015.4 377.20000000000005L1092.6 449.2Q1096.6 452.9 1096.3 457.9L1088.1000000000001 602.9Q1087.7 607.9 1084.7 604.9L1009.8 530.5Q1007.8 528.5 1007.8 524.5Z" fill="url(#gIn)" stroke="#0c0b09" stroke-width="1"/><polygon points="1012.9,376.0 1023.0,385.0 1019.6,525.0 1008.5,527.8" fill="#57534b"/><path d="M1023 385L1019.6 523Q1019.5 529 1024 533" fill="none" stroke="#0c0b09" stroke-width="0.9"/><polygon points="1008.6,529.0 1022.0,526.5 1029.5,534.5 1094.0,503.5 1087.5,606.5" fill="url(#gFloor)"/><polygon points="1021.0,523.5 1094.3,487.6 1094.0,503.5 1029.5,534.5 1023.0,531.0" fill="#5f5b53"/><path d="M1021.5 524.5L1094.3 488.6M1024.5 528.5L1094.2 494.5M1029.5 534.5L1094 503.5M1022 526.5L1029.5 534.5" fill="none" stroke="#0c0b09" stroke-width="0.8"/><ellipse cx="1049" cy="531.8" rx="2.6" ry="1.9" fill="#3d3a35" stroke="#0c0b09" stroke-width="0.7"/><path d="M1012.4 378.6Q1012.4 374.6 1015.4 377.20000000000005L1092.6 449.2Q1096.6 452.9 1096.3 457.9L1088.1000000000001 602.9Q1087.7 607.9 1084.7 604.9L1009.8 530.5Q1007.8 528.5 1007.8 524.5Z" fill="none" stroke="#0c0b09" stroke-width="1"/><polygon points="814.5,621.5 904.5,724.0 963.1,675.0 873.1,572.5" fill="#000" opacity="0.34" filter="url(#b6)"/><polygon points="847.8,452.6 877.1,438.4 953.7,516.5 921.2,528.9" fill="url(#gTop3)" stroke="#0c0b09" stroke-width="1" stroke-linejoin="round"/><polygon points="921.2,528.9 953.7,516.5 954.5,666.0 924.7,680.0" fill="url(#gRight3)" stroke="#0c0b09" stroke-width="1" stroke-linejoin="round"/><polygon points="835.7,450.4 841.1,447.3 921.2,528.9 914.3,531.8" fill="#726e64" stroke="#0c0b09" stroke-width="0.9" stroke-linejoin="round"/><polygon points="914.3,531.8 921.2,528.9 924.7,687.4 918.6,690.5" fill="#4c4842" stroke="#0c0b09" stroke-width="0.9" stroke-linejoin="round"/><polygon points="808.4,449.7 825.0,440.8 913.9,531.8 897.2,541.0" fill="#767268" stroke="#0c0b09" stroke-width="1" stroke-linejoin="round"/><polygon points="897.2,541.0 913.9,531.8 918.6,704.2 900.3,711.1" fill="#57534b" stroke="#0c0b09" stroke-width="1" stroke-linejoin="round"/><path d="M807.5 453Q807.3 449.5 810.3 451.5L893.5 538.5Q897.3 542.5 897.4 547.5L900.8 706Q900.8 713 896.5 708.5L819.5 619.5Q817.3 617 817.1 613.5Z" fill="#5a564e" stroke="#0c0b09" stroke-width="1"/><path d="M809.2 452.3L893 539.8Q896.3 543.3 896.6 548" fill="none" stroke="#9b978b" stroke-width="1.2"/><path d="M812.8 470Q812.6 465 816 468.5L890.5 543.5Q893.6 547 893.7 551L894.4 691Q894.4 698 890.8 694L823.5 619Q821.6 617 821.5 613Z" fill="#4e4a43" stroke="#0c0b09" stroke-width="1"/><polygon points="813.5,470.5 826.5,482.0 833.1,610.4 822.0,617.0" fill="#56524a"/><polygon points="826.5,482.0 883.5,541.0 883.5,589.8 833.1,610.4" fill="url(#gIn3)"/><polygon points="883.4,541.5 889.2,546.5 889.3,595.1 883.5,589.8" fill="#ffffff"/><polygon points="889.2,546.5 893.4,550.5 894.2,690.0 891.9,676.0 889.3,595.1" fill="#4a463f"/><polygon points="833.1,610.4 883.5,589.8 889.3,595.1 891.9,676.0" fill="url(#gFloor3)"/><polygon points="822.0,617.3 833.1,610.4 891.9,676.0 893.5,694.0" fill="#57534b"/><path d="M826.5 482L833.1 610.4L822 617.3M833.1 610.4L883.5 589.8M833.1 610.4L891.9 676M835 609.8L892 673.5M889.2 546.5L889.3 595.1L892.2 690" fill="none" stroke="#0c0b09" stroke-width="0.8"/><ellipse cx="879.7" cy="605" rx="2.8" ry="2.1" fill="#45413b" stroke="#0c0b09" stroke-width="0.7"/><path d="M812.8 470Q812.6 465 816 468.5L890.5 543.5Q893.6 547 893.7 551L894.4 691Q894.4 698 890.8 694L823.5 619Q821.6 617 821.5 613Z" fill="none" stroke="#0c0b09" stroke-width="1"/><polygon points="635.7,708.9 669.4,752.5 709.8,732.7 676.5,689.0" fill="#000" opacity="0.34" filter="url(#b5)"/><polygon points="613.6,551.0 626.2,546.4 631.5,546.8 651.4,540.1 684.0,578.3 703.0,724.5 666.8,741.5 636.5,703.1" fill="#2a2927"/><polygon points="628.3,545.7 642.0,539.4 643.0,543.6 630.4,549.3" fill="#6b6250" stroke="#0c0b09" stroke-width="0.7" stroke-linejoin="round"/><polygon points="631.5,549.3 651.4,540.1 684.0,578.3 660.9,588.1" fill="#3f3d39" stroke="#0c0b09" stroke-width="1" stroke-linejoin="round"/><polygon points="613.6,551.0 626.2,546.4 657.1,585.0 645.8,590.9" fill="#3a3834" stroke="#0c0b09" stroke-width="1" stroke-linejoin="round"/><polygon points="645.8,590.9 656.7,585.4 660.9,588.1 684.0,578.5 703.0,724.5 666.8,741.5" fill="url(#gFR)" stroke="#0c0b09" stroke-width="1" stroke-linejoin="round"/><polygon points="646.6,590.9 656.7,585.8 660.5,588.4 650.4,593.0" fill="#45433f"/><polygon points="613.6,551.0 645.8,590.9 666.8,741.5 636.5,703.1" fill="#2f2d2a" stroke="#0c0b09" stroke-width="1" stroke-linejoin="round"/><polygon points="624.8,569.8 632.4,576.5 638.5,629.9 627.5,621.3" fill="#201f1d" stroke="#0c0b09" stroke-width="0.5" stroke-linejoin="round"/><polygon points="627.8,574.0 632.4,577.8 637.9,627.4 634.3,624.3" fill="#45433f"/><polygon points="627.1,621.3 638.5,629.9 639.5,641.3 649.0,649.5 651.1,652.2 653.8,661.3 658.5,705.2 659.5,712.8 650.9,717.6 649.0,710.9 636.6,695.7 632.8,678.5" fill="#22211f" stroke="#0c0b09" stroke-width="0.6" stroke-linejoin="round"/><polygon points="636.6,643.4 639.7,641.9 647.3,649.5 646.1,656.8 637.0,649.1" fill="#3d3b37" stroke="#0c0b09" stroke-width="0.5" stroke-linejoin="round"/><polygon points="637.0,650.3 645.4,657.9 647.3,682.3 640.0,683.9" fill="#34322f" stroke="#0c0b09" stroke-width="0.5" stroke-linejoin="round"/><polygon points="647.7,659.8 653.8,662.1 657.2,698.0 651.1,693.0" fill="#47453f" stroke="#0c0b09" stroke-width="0.5" stroke-linejoin="round"/><polygon points="644.2,691.9 649.2,696.1 651.1,712.8 647.3,707.1" fill="#45433f" stroke="#0c0b09" stroke-width="0.5" stroke-linejoin="round"/><polygon points="646.1,657.5 653.4,660.2 653.8,662.5 647.3,660.2" fill="#504e48"/><ellipse cx="624.8" cy="590.4" rx="1.5" ry="2.2" fill="#1d1c1b" stroke="#5a5853" stroke-width="0.6"/><ellipse cx="642.0" cy="681.4" rx="2.3" ry="2.7" fill="#1d1c1b" stroke="#8a877e" stroke-width="0.6"/><polygon points="709.5,804.0 752.0,859.9 788.3,834.3 745.7,778.4" fill="#000" opacity="0.34" filter="url(#b5)"/><polygon points="693.8,649.1 705.9,643.7 730.0,633.3 769.5,681.6 781.6,825.9 760.7,841.2 748.7,848.9 710.2,798.9" fill="#2a2927"/><polygon points="708.1,643.0 730.0,633.3 769.5,681.6 746.5,691.3" fill="#3d3b37" stroke="#0c0b09" stroke-width="1" stroke-linejoin="round"/><polygon points="746.5,691.3 769.5,681.6 781.6,825.9 760.7,836.9" fill="url(#gFR2)" stroke="#0c0b09" stroke-width="1" stroke-linejoin="round"/><polygon points="693.8,649.1 705.9,643.7 744.7,691.3 733.7,697.0" fill="#383633" stroke="#0c0b09" stroke-width="1" stroke-linejoin="round"/><polygon points="733.7,697.0 744.7,691.7 760.7,841.2 748.7,848.9" fill="#2d2c2a" stroke="#0c0b09" stroke-width="1" stroke-linejoin="round"/><polygon points="734.6,697.0 744.3,692.6 743.8,694.8 735.5,698.8" fill="#4a4844"/><polygon points="693.8,649.1 733.7,697.0 748.7,848.9 710.2,798.9" fill="url(#gFF2)" stroke="#0c0b09" stroke-width="1" stroke-linejoin="round"/><ellipse cx="703.2" cy="689.1" rx="1.7" ry="2.4" fill="#2a2927" stroke="#111" stroke-width="0.6"/><polygon points="437.3,675.7 457.3,668.5 455.3,663.1 435.3,670.3" fill="#7d796b" stroke="#1c1b18" stroke-width="0.9" stroke-linejoin="round"/><path d="M436.1 672.4L456.1 665.2" stroke="#a29e90" stroke-width="1.6"/><ellipse cx="456.3" cy="665.8" rx="1.5" ry="2.9" transform="rotate(-19.8 456.3 665.8)" fill="#6a675c" stroke="#1c1b18" stroke-width="0.8"/><polygon points="437.3,675.7 433.9,673.9 435.3,670.3" fill="#4a473f" stroke="#1c1b18" stroke-width="0.8" stroke-linejoin="round"/><polygon points="510.2,782.1 530.8,774.9 528.8,769.5 508.2,776.7" fill="#7d796b" stroke="#1c1b18" stroke-width="0.9" stroke-linejoin="round"/><path d="M509.0 778.8L529.6 771.6" stroke="#a29e90" stroke-width="1.6"/><ellipse cx="529.8" cy="772.2" rx="1.5" ry="2.9" transform="rotate(-19.3 529.8 772.2)" fill="#6a675c" stroke="#1c1b18" stroke-width="0.8"/><polygon points="510.2,782.1 506.7,780.3 508.2,776.7" fill="#4a473f" stroke="#1c1b18" stroke-width="0.8" stroke-linejoin="round"/><polygon points="461.1,811.5 491.8,799.6 492.9,802.5 462.2,814.4" fill="#000" opacity="0.22" filter="url(#b3)"/><polygon points="467.1,823.6 482.5,819.2 486.9,832.4 471.5,836.8" fill="#000" opacity="0.07" filter="url(#b3)"/><polygon points="534.5,913.2 562.5,901.8 563.5,903.3 535.5,914.7" fill="#000" opacity="0.3" filter="url(#b2)"/><polygon points="460.9,760.0 476.6,752.6 478.9,754.1 480.8,760.0 465.9,766.9" fill="#383632" stroke="#0c0b09" stroke-width="1" stroke-linejoin="round"/><polygon points="444.1,766.3 460.2,759.5 479.2,790.4 464.0,798.8 446.4,772.8" fill="#403d39" stroke="#0c0b09" stroke-width="1.1" stroke-linejoin="round"/><polygon points="444.1,766.3 448.3,769.8 462.8,791.0 464.0,798.8 446.4,772.8" fill="#242321"/><path d="M448.3 769.8L461.7 764.4M462.8 791.0L475.4 785.4M448.3 769.8L462.8 791.0" stroke="#0c0b09" stroke-width="0.8" fill="none"/><ellipse cx="1354.4" cy="575" rx="13" ry="7" fill="#000" opacity="0.10" filter="url(#b3)"/><path d="M1339.1000000000001 570V575A12.3 7.2 0 0 0 1363.7 575V570Z" fill="#56524a" stroke="#0c0b09" stroke-width="0.8"/><ellipse cx="1351.4" cy="566" rx="14.3" ry="9.6" fill="#6b675d" stroke="#0c0b09" stroke-width="0.8"/><ellipse cx="1351.4" cy="566" rx="3.2" ry="2.3" fill="#55514a" stroke="#0c0b09" stroke-width="0.7"/><ellipse cx="1413.5" cy="626.7" rx="13" ry="7" fill="#000" opacity="0.10" filter="url(#b3)"/><path d="M1398.2 621.7V626.7A12.3 7.2 0 0 0 1422.8 626.7V621.7Z" fill="#56524a" stroke="#0c0b09" stroke-width="0.8"/><ellipse cx="1410.5" cy="617.7" rx="14.3" ry="9.6" fill="#6b675d" stroke="#0c0b09" stroke-width="0.8"/><ellipse cx="1410.5" cy="617.7" rx="3.2" ry="2.3" fill="#55514a" stroke="#0c0b09" stroke-width="0.7"/><ellipse cx="1173.5" cy="667.2" rx="13" ry="7" fill="#000" opacity="0.10" filter="url(#b3)"/><path d="M1158.2 662.2V667.2A12.3 7.2 0 0 0 1182.8 667.2V662.2Z" fill="#56524a" stroke="#0c0b09" stroke-width="0.8"/><ellipse cx="1170.5" cy="658.2" rx="14.3" ry="9.6" fill="#6b675d" stroke="#0c0b09" stroke-width="0.8"/><ellipse cx="1170.5" cy="658.2" rx="3.2" ry="2.3" fill="#55514a" stroke="#0c0b09" stroke-width="0.7"/><ellipse cx="1230.2" cy="723.3" rx="13" ry="7" fill="#000" opacity="0.10" filter="url(#b3)"/><path d="M1214.9 718.3V723.3A12.3 7.2 0 0 0 1239.5 723.3V718.3Z" fill="#56524a" stroke="#0c0b09" stroke-width="0.8"/><ellipse cx="1227.2" cy="714.3" rx="14.3" ry="9.6" fill="#6b675d" stroke="#0c0b09" stroke-width="0.8"/><ellipse cx="1227.2" cy="714.3" rx="3.2" ry="2.3" fill="#55514a" stroke="#0c0b09" stroke-width="0.7"/><ellipse cx="1862" cy="228" rx="34" ry="16" fill="#000" opacity="0.13" filter="url(#b7)"/><polygon points="1823.4,181.0 1862.5,165.1 1893.1,190.5 1850.1,210.1" fill="#efefef"/><polygon points="1823.4,181.0 1850.1,210.1 1850.1,243.4 1826.3,214.4" fill="#e4e4e4"/><polygon points="1850.1,210.1 1893.1,190.5 1888.3,222.9 1850.1,243.4" fill="#e9e9e9"/><path d="M1823.4 181L1862.5 165.1L1893.1 190.5L1850.1 210.1ZM1850.1 210.1V243.4M1893.1 190.5L1888.3 222.9L1850.1 243.4" fill="none" stroke="#777" stroke-width="0.7" stroke-dasharray="5,2.5"/><polygon points="1844,203 1851,199.5 1857,205 1857,212 1850.5,216 1844,210" fill="#f2f2f2" opacity="0.9"/><path d="M1826.3 214.4L1820.5 175.2" stroke="#6a6af0" stroke-width="1.6"/><path d="M1826.3 214.4L1854.9 250.6" stroke="#f08a8a" stroke-width="1.6"/><text x="1815" y="173.2" font-size="14" fill="#7a7af2">Z</text><text x="1853.8" y="261" font-size="14.5" fill="#f28a8a">X</text><text font-size="22" fill="#9c9ca6" transform="matrix(0.67,0.72,-1.07,0.5,1848.3,190.9)" text-anchor="middle">上</text><text font-size="22" fill="#9c9ca6" transform="matrix(0.67,0.72,0,0.83,1837.5,219.2)" text-anchor="middle">前</text><text font-size="22" fill="#9c9ca6" transform="matrix(1.075,-0.49,-0.06,0.82,1869.9,223.6)" text-anchor="middle">右</text><rect x="841.5" y="1008" width="236" height="24" fill="#f2f2f2" opacity="0.92"/><g stroke="#444" fill="none" stroke-width="1.2"><path d="M852.5 1014V1027"/><path d="M850 1016L852.5 1012.5L855 1016"/><ellipse cx="852.5" cy="1021.5" rx="6.5" ry="2.6"/><path d="M847.5 1019.5L845.5 1022L848.5 1023.5"/></g><polygon points="864.0,1018.5 871.0,1018.5 867.5,1023.0" fill="#444"/><g stroke="#444" fill="none" stroke-width="1.2"><rect x="877.5" y="1017.5" width="15" height="10"/><path d="M880 1017L883 1013.5L885 1015.5L888 1012.5"/><rect x="881" y="1020.5" width="8" height="4" fill="#bbb" stroke-width="0.8"/></g><path d="M905.5 1022.5L903.5 1020.5Q902.5 1019.5 903.5 1018.8Q904.5 1018.3 905.5 1019.3L907 1020.8V1014.5Q907 1013.3 908 1013.3Q909 1013.3 909 1014.5V1013.3Q909 1012.3 910.2 1012.3Q911.3 1012.3 911.3 1013.5V1014Q911.3 1013 912.4 1013Q913.5 1013 913.5 1014.3V1015.5Q913.5 1014.6 914.5 1014.6Q915.6 1014.6 915.6 1015.8V1021.5Q915.6 1024 914 1026V1028H907.5V1026Q906 1024 905.5 1022.5Z" fill="#fff" stroke="#444" stroke-width="1"/><path d="M909 1014.5V1019.5M911.3 1014V1019.5M913.5 1015.5V1019.8" stroke="#444" stroke-width="0.8"/><circle cx="934.5" cy="1019.5" r="4.6" fill="#e3eefc" stroke="#444" stroke-width="1.3"/><path d="M938 1023L942.5 1027.5" stroke="#444" stroke-width="2.2"/><path d="M940 1014.5H945M942.5 1012V1017M940 1019H945" stroke="#444" stroke-width="0.9"/><rect x="955.5" y="1012.5" width="14" height="13" fill="none" stroke="#444" stroke-width="0.9" stroke-dasharray="2,1.3"/><circle cx="962" cy="1018.5" r="5.6" fill="#e3eefc" stroke="#444" stroke-width="1.3"/><path d="M966 1023L971 1028" stroke="#444" stroke-width="2.4"/><polygon points="975.0,1018.5 982.0,1018.5 978.5,1023.0" fill="#444"/><rect x="989" y="1012.5" width="15" height="11.5" fill="#5b87c7" stroke="#444" stroke-width="1.1"/><rect x="991" y="1014.5" width="11" height="7.5" fill="#a9c6ee"/><path d="M994 1027.5H999.5M996.7 1024V1027.5" stroke="#444" stroke-width="1.3"/><polygon points="1006.0,1018.5 1013.0,1018.5 1009.5,1023.0" fill="#444"/><rect x="1019.5" y="1012.5" width="15" height="15" fill="#ddd" stroke="#444" stroke-width="1"/><path d="M1022.5 1012.5V1027.5M1025.5 1012.5V1027.5M1028.5 1012.5V1027.5M1031.5 1012.5V1027.5M1019.5 1015.5H1034.5M1019.5 1018.5H1034.5M1019.5 1021.5H1034.5M1019.5 1024.5H1034.5" stroke="#444" stroke-width="0.7"/><polygon points="1037.0,1018.5 1044.0,1018.5 1040.5,1023.0" fill="#444"/><rect x="1051" y="1013.5" width="6" height="5.5" fill="#9fc0ee" stroke="#3a5a9a" stroke-width="1.1"/><rect x="1058.5" y="1013.5" width="6" height="5.5" fill="#9fc0ee" stroke="#3a5a9a" stroke-width="1.1"/><rect x="1051" y="1020.5" width="6" height="5.5" fill="#9fc0ee" stroke="#3a5a9a" stroke-width="1.1"/><rect x="1058.5" y="1020.5" width="6" height="5.5" fill="#9fc0ee" stroke="#3a5a9a" stroke-width="1.1"/><polygon points="1067.5,1018.5 1074.5,1018.5 1071,1023.0" fill="#444"/></svg></div>
<div id="browser" class="abs" style="left:0;top:140px;width:320px;height:896px"><svg width="320" height="896" viewBox="0 140 320 896"><defs><linearGradient id="gBody" x1="0" y1="0" x2="1" y2="0"><stop offset="0" stop-color="#f4f5f7"/><stop offset="0.55" stop-color="#c9cdd6"/><stop offset="1" stop-color="#e8eaee"/></linearGradient><linearGradient id="gArr" x1="1" y1="0" x2="0.4" y2="1"><stop offset="0" stop-color="#d0d0d0"/><stop offset="1" stop-color="#444"/></linearGradient></defs><rect x="4.5" y="144.5" width="299.5" height="24" fill="#f2f2f2" stroke="#c6c6c6"/><polygon points="9.5,156.7 14,153.7 14,159.7" fill="#222"/><polygon points="14.5,156.7 19,153.7 19,159.7" fill="#222"/><text x="29" y="160" font-size="11" fill="#555" textLength="31" lengthAdjust="spacingAndGlyphs">ブラウザ</text><circle cx="287" cy="156.6" r="4.3" fill="#222"/><rect x="284.5" y="156" width="5" height="1.3" fill="#f2f2f2"/><path d="M299.5 152.5V161.5M301.5 150.5V162.5" stroke="#777" stroke-width="1"/><rect x="8.5" y="174" width="5.3" height="809.5" rx="2.5" fill="#c6c6c8"/><rect x="8.5" y="174" width="5.3" height="184" rx="2.5" fill="#9b9b9b"/><rect x="40.2" y="174.2" width="175.60000000000002" height="19.5" fill="#f0f0f0"/><polygon points="20.6,189.5 31.6,189.5 31.6,178.4" fill="url(#gArr)" stroke="#222" stroke-width="1" stroke-linejoin="round"/><path d="M42.8 183.8Q50.9 173.8 59.0 183.8Q50.9 193.8 42.8 183.8Z" fill="#999"/><circle cx="50.9" cy="183.8" r="3.1" fill="#f0f0f0"/><circle cx="50.9" cy="183.8" r="1.7" fill="#999"/><rect x="65" y="176.1" width="126" height="15.6" fill="#999"/><g stroke="#4a4f5c" stroke-width="1" stroke-linejoin="round"><polygon points="68.5,180.7 72,176.7 83.5,176.7 79.5,180.7" fill="#fff"/><polygon points="79.5,180.7 83.5,176.7 83.5,187.2 79.5,191.2" fill="#c5c9d2"/><rect x="68.5" y="180.7" width="11" height="10.5" rx="1" fill="url(#gBody)"/></g><text x="98.4" y="188.1" font-size="11" fill="#fff" textLength="82.8" lengthAdjust="spacingAndGlyphs" font-weight="bold">JR-F01_open v1</text><circle cx="201.5" cy="184.5" r="5.8" fill="#fff" stroke="#222" stroke-width="1.1"/><circle cx="201.5" cy="184.5" r="2.4" fill="#222"/><rect x="58.3" y="198.2" width="121.7" height="19.5" fill="#f0f0f0"/><path d="M41.099999999999994 202L48.8 208L41.099999999999994 214.2Z" fill="#eef0f4" stroke="#222" stroke-width="1.5" stroke-linejoin="round"/><g fill="#999"><rect x="67.3" y="200" width="3.4" height="16" transform="rotate(0 69 208)"/><rect x="67.3" y="200" width="3.4" height="16" transform="rotate(45 69 208)"/><rect x="67.3" y="200" width="3.4" height="16" transform="rotate(90 69 208)"/><rect x="67.3" y="200" width="3.4" height="16" transform="rotate(135 69 208)"/><circle cx="69" cy="208" r="5.8"/><circle cx="69" cy="208" r="2.6" fill="#f0f0f0"/></g><text x="91.5" y="212" font-size="11" fill="#333" textLength="77" lengthAdjust="spacingAndGlyphs">ドキュメントの設定</text><rect x="58.3" y="222.2" width="89.3" height="19.5" fill="#f0f0f0"/><path d="M41.099999999999994 226L48.8 232L41.099999999999994 238.2Z" fill="#eef0f4" stroke="#222" stroke-width="1.5" stroke-linejoin="round"/><path d="M61.2 225.6H67.7L69.2 227.1H77.0V238.4H61.2Z" fill="#999"/><path d="M61.2 227.9H68.0" stroke="#f0f0f0" stroke-width="0.7"/><text x="89.8" y="236" font-size="11" fill="#333" textLength="46" lengthAdjust="spacingAndGlyphs">ビュー管理</text><rect x="58.3" y="246.2" width="90.60000000000001" height="19.5" fill="#f0f0f0"/><path d="M41.099999999999994 250L48.8 256L41.099999999999994 262.2Z" fill="#eef0f4" stroke="#222" stroke-width="1.5" stroke-linejoin="round"/><g fill="none" stroke="#aaa" stroke-width="0.9"><path d="M61 256Q69 246.5 77 256Q69 265.5 61 256Z"/><circle cx="69" cy="256" r="3.2"/><path d="M63 250L75 262"/></g><path d="M86.1 249.6H92.6L94.1 251.1H101.89999999999999V262.4H86.1Z" fill="#999"/><path d="M86.1 251.9H92.89999999999999" stroke="#f0f0f0" stroke-width="0.7"/><text x="116" y="260" font-size="11" fill="#333" textLength="20.2" lengthAdjust="spacingAndGlyphs">原点</text><rect x="58.3" y="270.2" width="90.60000000000001" height="19.5" fill="#f0f0f0"/><polygon points="38.8,285.5 49.8,285.5 49.8,274.4" fill="url(#gArr)" stroke="#222" stroke-width="1" stroke-linejoin="round"/><path d="M60.9 280Q69 270 77.1 280Q69 290 60.9 280Z" fill="#999"/><circle cx="69" cy="280" r="3.1" fill="#f0f0f0"/><circle cx="69" cy="280" r="1.7" fill="#999"/><path d="M86.1 273.6H92.6L94.1 275.1H101.89999999999999V286.40000000000003H86.1Z" fill="#999"/><path d="M86.1 275.90000000000003H92.89999999999999" stroke="#f0f0f0" stroke-width="0.7"/><text x="116" y="284" font-size="11" fill="#333" textLength="23.2" lengthAdjust="spacingAndGlyphs">ボディ</text><rect x="76.2" y="294.2" width="110.60000000000001" height="19.5" fill="#f0f0f0"/><polygon points="56.8,309.5 67.8,309.5 67.8,298.4" fill="url(#gArr)" stroke="#222" stroke-width="1" stroke-linejoin="round"/><path d="M78.9 304Q87 294 95.1 304Q87 314 78.9 304Z" fill="#999"/><circle cx="87" cy="304" r="3.1" fill="#f0f0f0"/><circle cx="87" cy="304" r="1.7" fill="#999"/><path d="M104.1 297.6H110.6L112.1 299.1H119.89999999999999V310.40000000000003H104.1Z" fill="#999"/><path d="M104.1 299.90000000000003H110.89999999999999" stroke="#f0f0f0" stroke-width="0.7"/><text x="134.4" y="308.1" font-size="11" fill="#333" textLength="42.6" lengthAdjust="spacingAndGlyphs">FDD (12)</text><rect x="94.2" y="318.2" width="106.49999999999999" height="19.5" fill="#f0f0f0"/><path d="M96.9 328Q105 318 113.1 328Q105 338 96.9 328Z" fill="#999"/><circle cx="105" cy="328" r="3.1" fill="#f0f0f0"/><circle cx="105" cy="328" r="1.7" fill="#999"/><rect x="122.6" y="320.8" width="14.8" height="14.8" rx="4" fill="url(#gBody)" stroke="#4a4f5c" stroke-width="1.1"/><path d="M123.2 324.8Q130 326.8 136.8 324.8" fill="none" stroke="#fff" stroke-width="0"/><path d="M123.2 325.2Q130 327.2 136.8 325.2V323.7Q136.5 321.4 133.5 321.4H126.5Q123.5 321.4 123.2 323.7Z" fill="#fbfbfc"/><text y="332.1" font-size="11" fill="#333"><tspan x="151.8" textLength="15.7" lengthAdjust="spacingAndGlyphs">足・</tspan><tspan x="169.7" textLength="22.2" lengthAdjust="spacingAndGlyphs">1 (2)</tspan></text><rect x="94.2" y="342.2" width="106.49999999999999" height="19.5" fill="#f0f0f0"/><path d="M96.9 352Q105 342 113.1 352Q105 362 96.9 352Z" fill="#999"/><circle cx="105" cy="352" r="3.1" fill="#f0f0f0"/><circle cx="105" cy="352" r="1.7" fill="#999"/><rect x="122.6" y="344.8" width="14.8" height="14.8" rx="4" fill="url(#gBody)" stroke="#4a4f5c" stroke-width="1.1"/><path d="M123.2 348.8Q130 350.8 136.8 348.8" fill="none" stroke="#fff" stroke-width="0"/><path d="M123.2 349.2Q130 351.2 136.8 349.2V347.7Q136.5 345.4 133.5 345.4H126.5Q123.5 345.4 123.2 347.7Z" fill="#fbfbfc"/><text y="356.1" font-size="11" fill="#333"><tspan x="151.8" textLength="15.7" lengthAdjust="spacingAndGlyphs">足・</tspan><tspan x="169.2" textLength="22.7" lengthAdjust="spacingAndGlyphs">2 (2)</tspan></text><rect x="94.2" y="366.2" width="106.49999999999999" height="19.5" fill="#f0f0f0"/><path d="M96.9 376Q105 366 113.1 376Q105 386 96.9 376Z" fill="#999"/><circle cx="105" cy="376" r="3.1" fill="#f0f0f0"/><circle cx="105" cy="376" r="1.7" fill="#999"/><rect x="122.6" y="368.8" width="14.8" height="14.8" rx="4" fill="url(#gBody)" stroke="#4a4f5c" stroke-width="1.1"/><path d="M123.2 372.8Q130 374.8 136.8 372.8" fill="none" stroke="#fff" stroke-width="0"/><path d="M123.2 373.2Q130 375.2 136.8 373.2V371.7Q136.5 369.4 133.5 369.4H126.5Q123.5 369.4 123.2 371.7Z" fill="#fbfbfc"/><text y="380.1" font-size="11" fill="#333"><tspan x="151.8" textLength="15.7" lengthAdjust="spacingAndGlyphs">足・</tspan><tspan x="169.2" textLength="22.7" lengthAdjust="spacingAndGlyphs">3 (2)</tspan></text><rect x="94.2" y="390.2" width="106.49999999999999" height="19.5" fill="#f0f0f0"/><path d="M96.9 400Q105 390 113.1 400Q105 410 96.9 400Z" fill="#999"/><circle cx="105" cy="400" r="3.1" fill="#f0f0f0"/><circle cx="105" cy="400" r="1.7" fill="#999"/><rect x="122.6" y="392.8" width="14.8" height="14.8" rx="4" fill="url(#gBody)" stroke="#4a4f5c" stroke-width="1.1"/><path d="M123.2 396.8Q130 398.8 136.8 396.8" fill="none" stroke="#fff" stroke-width="0"/><path d="M123.2 397.2Q130 399.2 136.8 397.2V395.7Q136.5 393.4 133.5 393.4H126.5Q123.5 393.4 123.2 395.7Z" fill="#fbfbfc"/><text y="404.1" font-size="11" fill="#333"><tspan x="151.8" textLength="15.7" lengthAdjust="spacingAndGlyphs">足・</tspan><tspan x="169.2" textLength="23.1" lengthAdjust="spacingAndGlyphs">4 (2)</tspan></text><rect x="94.2" y="414.2" width="142.8" height="19.5" fill="#f0f0f0"/><path d="M96.9 424Q105 414 113.1 424Q105 434 96.9 424Z" fill="#999"/><circle cx="105" cy="424" r="3.1" fill="#f0f0f0"/><circle cx="105" cy="424" r="1.7" fill="#999"/><rect x="122.6" y="416.8" width="14.8" height="14.8" rx="4" fill="url(#gBody)" stroke="#4a4f5c" stroke-width="1.1"/><path d="M123.2 420.8Q130 422.8 136.8 420.8" fill="none" stroke="#fff" stroke-width="0"/><path d="M123.2 421.2Q130 423.2 136.8 421.2V419.7Q136.5 417.4 133.5 417.4H126.5Q123.5 417.4 123.2 419.7Z" fill="#fbfbfc"/><text y="428.1" font-size="11" fill="#333"><tspan x="151.9" textLength="56.5" lengthAdjust="spacingAndGlyphs">フロントパネル</tspan><tspan x="210.8" textLength="16.2" lengthAdjust="spacingAndGlyphs"> (2)</tspan></text><rect x="94.2" y="438.2" width="106.49999999999999" height="19.5" fill="#f0f0f0"/><path d="M96.9 448Q105 438 113.1 448Q105 458 96.9 448Z" fill="#999"/><circle cx="105" cy="448" r="3.1" fill="#f0f0f0"/><circle cx="105" cy="448" r="1.7" fill="#999"/><rect x="122.6" y="440.8" width="14.8" height="14.8" rx="4" fill="url(#gBody)" stroke="#4a4f5c" stroke-width="1.1"/><path d="M123.2 444.8Q130 446.8 136.8 444.8" fill="none" stroke="#fff" stroke-width="0"/><path d="M123.2 445.2Q130 447.2 136.8 445.2V443.7Q136.5 441.4 133.5 441.4H126.5Q123.5 441.4 123.2 443.7Z" fill="#fbfbfc"/><text y="452.1" font-size="11" fill="#333"><tspan x="151.9" textLength="37.2" lengthAdjust="spacingAndGlyphs">FDD (1)</tspan></text><rect x="94.2" y="462.2" width="142.8" height="19.5" fill="#f0f0f0"/><path d="M96.9 472Q105 462 113.1 472Q105 482 96.9 472Z" fill="#999"/><circle cx="105" cy="472" r="3.1" fill="#f0f0f0"/><circle cx="105" cy="472" r="1.7" fill="#999"/><rect x="122.6" y="464.8" width="14.8" height="14.8" rx="4" fill="url(#gBody)" stroke="#4a4f5c" stroke-width="1.1"/><path d="M123.2 468.8Q130 470.8 136.8 468.8" fill="none" stroke="#fff" stroke-width="0"/><path d="M123.2 469.2Q130 471.2 136.8 469.2V467.7Q136.5 465.4 133.5 465.4H126.5Q123.5 465.4 123.2 467.7Z" fill="#fbfbfc"/><text y="476.1" font-size="11" fill="#333"><tspan x="151.9" textLength="63.1" lengthAdjust="spacingAndGlyphs">フロントパネル・</tspan><tspan x="215.4" textLength="9.9" lengthAdjust="spacingAndGlyphs">蓋</tspan></text><rect x="94.2" y="486.2" width="114.8" height="19.5" fill="#f0f0f0"/><path d="M96.9 496Q105 486 113.1 496Q105 506 96.9 496Z" fill="#999"/><circle cx="105" cy="496" r="3.1" fill="#f0f0f0"/><circle cx="105" cy="496" r="1.7" fill="#999"/><rect x="122.6" y="488.8" width="14.8" height="14.8" rx="4" fill="url(#gBody)" stroke="#4a4f5c" stroke-width="1.1"/><path d="M123.2 492.8Q130 494.8 136.8 492.8" fill="none" stroke="#fff" stroke-width="0"/><path d="M123.2 493.2Q130 495.2 136.8 493.2V491.7Q136.5 489.4 133.5 489.4H126.5Q123.5 489.4 123.2 491.7Z" fill="#fbfbfc"/><text y="500.1" font-size="11" fill="#333"><tspan x="151.9" textLength="24.8" lengthAdjust="spacingAndGlyphs">FDD/</tspan><tspan x="176.9" textLength="22.4" lengthAdjust="spacingAndGlyphs">レバー</tspan></text><rect x="94.2" y="510.2" width="114.8" height="19.5" fill="#f0f0f0"/><path d="M96.9 520Q105 510 113.1 520Q105 530 96.9 520Z" fill="#999"/><circle cx="105" cy="520" r="3.1" fill="#f0f0f0"/><circle cx="105" cy="520" r="1.7" fill="#999"/><rect x="122.6" y="512.8000000000001" width="14.8" height="14.8" rx="4" fill="url(#gBody)" stroke="#4a4f5c" stroke-width="1.1"/><path d="M123.2 516.8000000000001Q130 518.8000000000001 136.8 516.8000000000001" fill="none" stroke="#fff" stroke-width="0"/><path d="M123.2 517.2Q130 519.2 136.8 517.2V515.7Q136.5 513.4000000000001 133.5 513.4000000000001H126.5Q123.5 513.4000000000001 123.2 515.7Z" fill="#fbfbfc"/><text y="524.1" font-size="11" fill="#333"><tspan x="151.9" textLength="18.8" lengthAdjust="spacingAndGlyphs">FDD</tspan><tspan x="170" textLength="8.5" lengthAdjust="spacingAndGlyphs">・</tspan><tspan x="176.2" textLength="20.6" lengthAdjust="spacingAndGlyphs"> LED</tspan></text><rect x="94.2" y="534.2" width="110.60000000000001" height="19.5" fill="#f0f0f0"/><path d="M96.9 544Q105 534 113.1 544Q105 554 96.9 544Z" fill="#999"/><circle cx="105" cy="544" r="3.1" fill="#f0f0f0"/><circle cx="105" cy="544" r="1.7" fill="#999"/><rect x="122.6" y="536.8000000000001" width="14.8" height="14.8" rx="4" fill="url(#gBody)" stroke="#4a4f5c" stroke-width="1.1"/><path d="M123.2 540.8000000000001Q130 542.8000000000001 136.8 540.8000000000001" fill="none" stroke="#fff" stroke-width="0"/><path d="M123.2 541.2Q130 543.2 136.8 541.2V539.7Q136.5 537.4000000000001 133.5 537.4000000000001H126.5Q123.5 537.4000000000001 123.2 539.7Z" fill="#fbfbfc"/><text y="548.1" font-size="11" fill="#333"><tspan x="151.9" textLength="19.6" lengthAdjust="spacingAndGlyphs">電源</tspan><tspan x="172.9" textLength="19.9" lengthAdjust="spacingAndGlyphs">LED</tspan></text><rect x="94.2" y="558.2" width="138.60000000000002" height="19.5" fill="#f0f0f0"/><path d="M96.9 568Q105 558 113.1 568Q105 578 96.9 568Z" fill="#999"/><circle cx="105" cy="568" r="3.1" fill="#f0f0f0"/><circle cx="105" cy="568" r="1.7" fill="#999"/><rect x="122.6" y="560.8000000000001" width="14.8" height="14.8" rx="4" fill="url(#gBody)" stroke="#4a4f5c" stroke-width="1.1"/><path d="M123.2 564.8000000000001Q130 566.8000000000001 136.8 564.8000000000001" fill="none" stroke="#fff" stroke-width="0"/><path d="M123.2 565.2Q130 567.2 136.8 565.2V563.7Q136.5 561.4000000000001 133.5 561.4000000000001H126.5Q123.5 561.4000000000001 123.2 563.7Z" fill="#fbfbfc"/><text y="572.1" font-size="11" fill="#333"><tspan x="151.9" textLength="22.1" lengthAdjust="spacingAndGlyphs">ボディ</tspan><tspan x="172.5" textLength="10.0" lengthAdjust="spacingAndGlyphs">・</tspan><tspan x="183.1" textLength="19.4" lengthAdjust="spacingAndGlyphs">背面</tspan><tspan x="204.8" textLength="16.0" lengthAdjust="spacingAndGlyphs"> (2)</tspan></text><rect x="94.2" y="582.2" width="110.60000000000001" height="19.5" fill="#f0f0f0"/><path d="M96.9 592Q105 582 113.1 592Q105 602 96.9 592Z" fill="#999"/><circle cx="105" cy="592" r="3.1" fill="#f0f0f0"/><circle cx="105" cy="592" r="1.7" fill="#999"/><rect x="122.6" y="584.8000000000001" width="14.8" height="14.8" rx="4" fill="url(#gBody)" stroke="#4a4f5c" stroke-width="1.1"/><path d="M123.2 588.8000000000001Q130 590.8000000000001 136.8 588.8000000000001" fill="none" stroke="#fff" stroke-width="0"/><path d="M123.2 589.2Q130 591.2 136.8 589.2V587.7Q136.5 585.4000000000001 133.5 585.4000000000001H126.5Q123.5 585.4000000000001 123.2 587.7Z" fill="#fbfbfc"/><text y="596.1" font-size="11" fill="#333"><tspan x="151.9" textLength="22.1" lengthAdjust="spacingAndGlyphs">ボディ</tspan><tspan x="176" textLength="16.8" lengthAdjust="spacingAndGlyphs"> (1)</tspan></text><rect x="58.3" y="606.2" width="98.50000000000001" height="19.5" fill="#f0f0f0"/><path d="M41.099999999999994 610L48.8 616L41.099999999999994 622.2Z" fill="#eef0f4" stroke="#222" stroke-width="1.5" stroke-linejoin="round"/><path d="M60.9 616Q69 606 77.1 616Q69 626 60.9 616Z" fill="#999"/><circle cx="69" cy="616" r="3.1" fill="#f0f0f0"/><circle cx="69" cy="616" r="1.7" fill="#999"/><path d="M86.1 609.6H92.6L94.1 611.1H101.89999999999999V622.4H86.1Z" fill="#999"/><path d="M86.1 611.9H92.89999999999999" stroke="#f0f0f0" stroke-width="0.7"/><text x="116" y="620" font-size="11" fill="#333" textLength="30.5" lengthAdjust="spacingAndGlyphs">スケッチ</text><rect x="58.3" y="630.2" width="138.5" height="19.5" fill="#f0f0f0"/><path d="M41.099999999999994 634L48.8 640L41.099999999999994 646.2Z" fill="#eef0f4" stroke="#222" stroke-width="1.5" stroke-linejoin="round"/><path d="M60.9 640Q69 630 77.1 640Q69 650 60.9 640Z" fill="#999"/><circle cx="69" cy="640" r="3.1" fill="#f0f0f0"/><circle cx="69" cy="640" r="1.7" fill="#999"/><path d="M86.1 633.6H92.6L94.1 635.1H101.89999999999999V646.4H86.1Z" fill="#999"/><path d="M86.1 635.9H92.89999999999999" stroke="#f0f0f0" stroke-width="0.7"/><text x="116" y="644" font-size="11" fill="#333" textLength="70.2" lengthAdjust="spacingAndGlyphs">コンストラクション</text><rect x="58.2" y="654.2" width="105.8" height="19.5" fill="#f0f0f0"/><polygon points="61,669 70.5,669 73.5,665.5 73.5,668 70.5,671.8 61,671.8" fill="#c8c8c8"/><rect x="61" y="659.3" width="9.5" height="9.9" fill="#6cb2e6"/><polygon points="61,659.3 64,656 73.5,656 70.5,659.3" fill="#8fcdf7"/><polygon points="70.5,659.3 73.5,656 73.5,665.8 70.5,669.2" fill="#4a93cf"/><path d="M75.5 668.5V658.5" stroke="#222" stroke-width="1"/><polygon points="75.5,656.3 74,659.6 77,659.6" fill="#222"/><text y="667.8000000000001" font-size="11" fill="#333"><tspan x="90.8" textLength="38.2" lengthAdjust="spacingAndGlyphs">押し出し</tspan><tspan x="129.2" textLength="24.2" lengthAdjust="spacingAndGlyphs">5028</tspan></text><rect x="58.2" y="678.2" width="89.60000000000001" height="19.5" fill="#f0f0f0"/><path d="M61.5 694V686L66 681.8H69.5L71 694Z" fill="#dcdcdc" stroke="#444" stroke-width="0.9" stroke-linejoin="round"/><polygon points="66.5,685.5 70.5,681.8 74.2,690.5 70.2,694" fill="#6cb2e6"/><path d="M76 689.5L73 682.8" stroke="#222" stroke-width="0.9"/><polygon points="72.3,681.2 72.2,684.4 74.6,683.3" fill="#222"/><text y="691.8000000000001" font-size="11" fill="#333"><tspan x="91" textLength="20.4" lengthAdjust="spacingAndGlyphs">勾配</tspan><tspan x="112.6" textLength="24.4" lengthAdjust="spacingAndGlyphs">5029</tspan></text><rect x="58.2" y="702.2" width="105.8" height="19.5" fill="#f0f0f0"/><polygon points="61,717 70.5,717 73.5,713.5 73.5,716 70.5,719.8 61,719.8" fill="#c8c8c8"/><rect x="61" y="707.3" width="9.5" height="9.9" fill="#6cb2e6"/><polygon points="61,707.3 64,704 73.5,704 70.5,707.3" fill="#8fcdf7"/><polygon points="70.5,707.3 73.5,704 73.5,713.8 70.5,717.2" fill="#4a93cf"/><path d="M75.5 716.5V706.5" stroke="#222" stroke-width="1"/><polygon points="75.5,704.3 74,707.6 77,707.6" fill="#222"/><text y="715.8000000000001" font-size="11" fill="#333"><tspan x="90.8" textLength="38.2" lengthAdjust="spacingAndGlyphs">押し出し</tspan><tspan x="129.2" textLength="24.2" lengthAdjust="spacingAndGlyphs">5030</tspan></text><rect x="58.2" y="726.2" width="101.99999999999999" height="19.5" fill="#f0f0f0"/><polygon points="61,741 70.5,741 73.5,737.5 73.5,740 70.5,743.8 61,743.8" fill="#c8c8c8"/><rect x="61" y="731.3" width="9.5" height="9.9" fill="#6cb2e6"/><polygon points="61,731.3 64,728 73.5,728 70.5,731.3" fill="#8fcdf7"/><polygon points="70.5,731.3 73.5,728 73.5,737.8 70.5,741.2" fill="#4a93cf"/><path d="M75.5 740.5V730.5" stroke="#222" stroke-width="1"/><polygon points="75.5,728.3 74,731.6 77,731.6" fill="#222"/><text y="739.8000000000001" font-size="11" fill="#333"><tspan x="90.8" textLength="38.2" lengthAdjust="spacingAndGlyphs">押し出し</tspan><tspan x="129.2" textLength="24.2" lengthAdjust="spacingAndGlyphs">5031</tspan></text><rect x="58.2" y="750.2" width="105.8" height="19.5" fill="#f0f0f0"/><polygon points="61,765 70.5,765 73.5,761.5 73.5,764 70.5,767.8 61,767.8" fill="#c8c8c8"/><rect x="61" y="755.3" width="9.5" height="9.9" fill="#6cb2e6"/><polygon points="61,755.3 64,752 73.5,752 70.5,755.3" fill="#8fcdf7"/><polygon points="70.5,755.3 73.5,752 73.5,761.8 70.5,765.2" fill="#4a93cf"/><path d="M75.5 764.5V754.5" stroke="#222" stroke-width="1"/><polygon points="75.5,752.3 74,755.6 77,755.6" fill="#222"/><text y="763.8000000000001" font-size="11" fill="#333"><tspan x="90.8" textLength="38.2" lengthAdjust="spacingAndGlyphs">押し出し</tspan><tspan x="129.2" textLength="24.2" lengthAdjust="spacingAndGlyphs">5032</tspan></text><rect x="58.2" y="774.2" width="89.60000000000001" height="19.5" fill="#f0f0f0"/><path d="M61.5 790V782L66 777.8H69.5L71 790Z" fill="#dcdcdc" stroke="#444" stroke-width="0.9" stroke-linejoin="round"/><polygon points="66.5,781.5 70.5,777.8 74.2,786.5 70.2,790" fill="#6cb2e6"/><path d="M76 785.5L73 778.8" stroke="#222" stroke-width="0.9"/><polygon points="72.3,777.2 72.2,780.4 74.6,779.3" fill="#222"/><text y="787.8000000000001" font-size="11" fill="#333"><tspan x="91" textLength="20.4" lengthAdjust="spacingAndGlyphs">勾配</tspan><tspan x="112.6" textLength="24.4" lengthAdjust="spacingAndGlyphs">5033</tspan></text><rect x="58.2" y="798.2" width="105.8" height="19.5" fill="#f0f0f0"/><polygon points="61,813 70.5,813 73.5,809.5 73.5,812 70.5,815.8 61,815.8" fill="#c8c8c8"/><rect x="61" y="803.3" width="9.5" height="9.9" fill="#6cb2e6"/><polygon points="61,803.3 64,800 73.5,800 70.5,803.3" fill="#8fcdf7"/><polygon points="70.5,803.3 73.5,800 73.5,809.8 70.5,813.2" fill="#4a93cf"/><path d="M75.5 812.5V802.5" stroke="#222" stroke-width="1"/><polygon points="75.5,800.3 74,803.6 77,803.6" fill="#222"/><text y="811.8000000000001" font-size="11" fill="#333"><tspan x="90.8" textLength="38.2" lengthAdjust="spacingAndGlyphs">押し出し</tspan><tspan x="129.2" textLength="24.2" lengthAdjust="spacingAndGlyphs">5034</tspan></text><rect x="58.2" y="822.2" width="105.8" height="19.5" fill="#f0f0f0"/><polygon points="61,837 70.5,837 73.5,833.5 73.5,836 70.5,839.8 61,839.8" fill="#c8c8c8"/><rect x="61" y="827.3" width="9.5" height="9.9" fill="#6cb2e6"/><polygon points="61,827.3 64,824 73.5,824 70.5,827.3" fill="#8fcdf7"/><polygon points="70.5,827.3 73.5,824 73.5,833.8 70.5,837.2" fill="#4a93cf"/><path d="M75.5 836.5V826.5" stroke="#222" stroke-width="1"/><polygon points="75.5,824.3 74,827.6 77,827.6" fill="#222"/><text y="835.8000000000001" font-size="11" fill="#333"><tspan x="90.8" textLength="38.2" lengthAdjust="spacingAndGlyphs">押し出し</tspan><tspan x="129.2" textLength="24.2" lengthAdjust="spacingAndGlyphs">5035</tspan></text><rect x="58.2" y="846.2" width="105.8" height="19.5" fill="#f0f0f0"/><polygon points="61,861 70.5,861 73.5,857.5 73.5,860 70.5,863.8 61,863.8" fill="#c8c8c8"/><rect x="61" y="851.3" width="9.5" height="9.9" fill="#6cb2e6"/><polygon points="61,851.3 64,848 73.5,848 70.5,851.3" fill="#8fcdf7"/><polygon points="70.5,851.3 73.5,848 73.5,857.8 70.5,861.2" fill="#4a93cf"/><path d="M75.5 860.5V850.5" stroke="#222" stroke-width="1"/><polygon points="75.5,848.3 74,851.6 77,851.6" fill="#222"/><text y="859.8000000000001" font-size="11" fill="#333"><tspan x="90.8" textLength="38.2" lengthAdjust="spacingAndGlyphs">押し出し</tspan><tspan x="129.2" textLength="24.2" lengthAdjust="spacingAndGlyphs">5036</tspan></text><rect x="58.2" y="870.2" width="89.60000000000001" height="19.5" fill="#f0f0f0"/><path d="M61.5 886V878L66 873.8H69.5L71 886Z" fill="#dcdcdc" stroke="#444" stroke-width="0.9" stroke-linejoin="round"/><polygon points="66.5,877.5 70.5,873.8 74.2,882.5 70.2,886" fill="#6cb2e6"/><path d="M76 881.5L73 874.8" stroke="#222" stroke-width="0.9"/><polygon points="72.3,873.2 72.2,876.4 74.6,875.3" fill="#222"/><text y="883.8000000000001" font-size="11" fill="#333"><tspan x="91" textLength="20.4" lengthAdjust="spacingAndGlyphs">勾配</tspan><tspan x="112.6" textLength="24.4" lengthAdjust="spacingAndGlyphs">5037</tspan></text><rect x="58.2" y="894.2" width="105.8" height="19.5" fill="#f0f0f0"/><polygon points="61,909 70.5,909 73.5,905.5 73.5,908 70.5,911.8 61,911.8" fill="#c8c8c8"/><rect x="61" y="899.3" width="9.5" height="9.9" fill="#6cb2e6"/><polygon points="61,899.3 64,896 73.5,896 70.5,899.3" fill="#8fcdf7"/><polygon points="70.5,899.3 73.5,896 73.5,905.8 70.5,909.2" fill="#4a93cf"/><path d="M75.5 908.5V898.5" stroke="#222" stroke-width="1"/><polygon points="75.5,896.3 74,899.6 77,899.6" fill="#222"/><text y="907.8000000000001" font-size="11" fill="#333"><tspan x="90.8" textLength="38.2" lengthAdjust="spacingAndGlyphs">押し出し</tspan><tspan x="129.2" textLength="24.2" lengthAdjust="spacingAndGlyphs">5038</tspan></text><rect x="58.2" y="918.2" width="105.8" height="19.5" fill="#f0f0f0"/><polygon points="61,933 70.5,933 73.5,929.5 73.5,932 70.5,935.8 61,935.8" fill="#c8c8c8"/><rect x="61" y="923.3" width="9.5" height="9.9" fill="#6cb2e6"/><polygon points="61,923.3 64,920 73.5,920 70.5,923.3" fill="#8fcdf7"/><polygon points="70.5,923.3 73.5,920 73.5,929.8 70.5,933.2" fill="#4a93cf"/><path d="M75.5 932.5V922.5" stroke="#222" stroke-width="1"/><polygon points="75.5,920.3 74,923.6 77,923.6" fill="#222"/><text y="931.8000000000001" font-size="11" fill="#333"><tspan x="90.8" textLength="38.2" lengthAdjust="spacingAndGlyphs">押し出し</tspan><tspan x="129.2" textLength="24.2" lengthAdjust="spacingAndGlyphs">5039</tspan></text><rect x="58.2" y="942.2" width="105.8" height="19.5" fill="#f0f0f0"/><polygon points="61,957 70.5,957 73.5,953.5 73.5,956 70.5,959.8 61,959.8" fill="#c8c8c8"/><rect x="61" y="947.3" width="9.5" height="9.9" fill="#6cb2e6"/><polygon points="61,947.3 64,944 73.5,944 70.5,947.3" fill="#8fcdf7"/><polygon points="70.5,947.3 73.5,944 73.5,953.8 70.5,957.2" fill="#4a93cf"/><path d="M75.5 956.5V946.5" stroke="#222" stroke-width="1"/><polygon points="75.5,944.3 74,947.6 77,947.6" fill="#222"/><text y="955.8000000000001" font-size="11" fill="#333"><tspan x="90.8" textLength="38.2" lengthAdjust="spacingAndGlyphs">押し出し</tspan><tspan x="129.2" textLength="24.2" lengthAdjust="spacingAndGlyphs">5040</tspan></text><rect x="58.2" y="966.2" width="85.8" height="19.5" fill="#f0f0f0"/><path d="M61.5 982V974L66 969.8H69.5L71 982Z" fill="#dcdcdc" stroke="#444" stroke-width="0.9" stroke-linejoin="round"/><polygon points="66.5,973.5 70.5,969.8 74.2,978.5 70.2,982" fill="#6cb2e6"/><path d="M76 977.5L73 970.8" stroke="#222" stroke-width="0.9"/><polygon points="72.3,969.2 72.2,972.4 74.6,971.3" fill="#222"/><text y="979.8000000000001" font-size="11" fill="#333"><tspan x="91" textLength="20.4" lengthAdjust="spacingAndGlyphs">勾配</tspan><tspan x="112.6" textLength="24.4" lengthAdjust="spacingAndGlyphs">5041</tspan></text><rect x="4.5" y="1007" width="299.5" height="24" fill="#f2f2f2" stroke="#c6c6c6"/><text x="27.5" y="1022.3" font-size="11" fill="#555" textLength="32" lengthAdjust="spacingAndGlyphs">コメント</text><circle cx="287.3" cy="1019.3" r="4.3" fill="#222"/><path d="M284.8 1019.3H289.8M287.3 1016.8V1021.8" stroke="#f2f2f2" stroke-width="1.2"/><path d="M299.5 1015V1024M301.5 1013V1025" stroke="#777" stroke-width="1"/></svg></div>
</body></html>
